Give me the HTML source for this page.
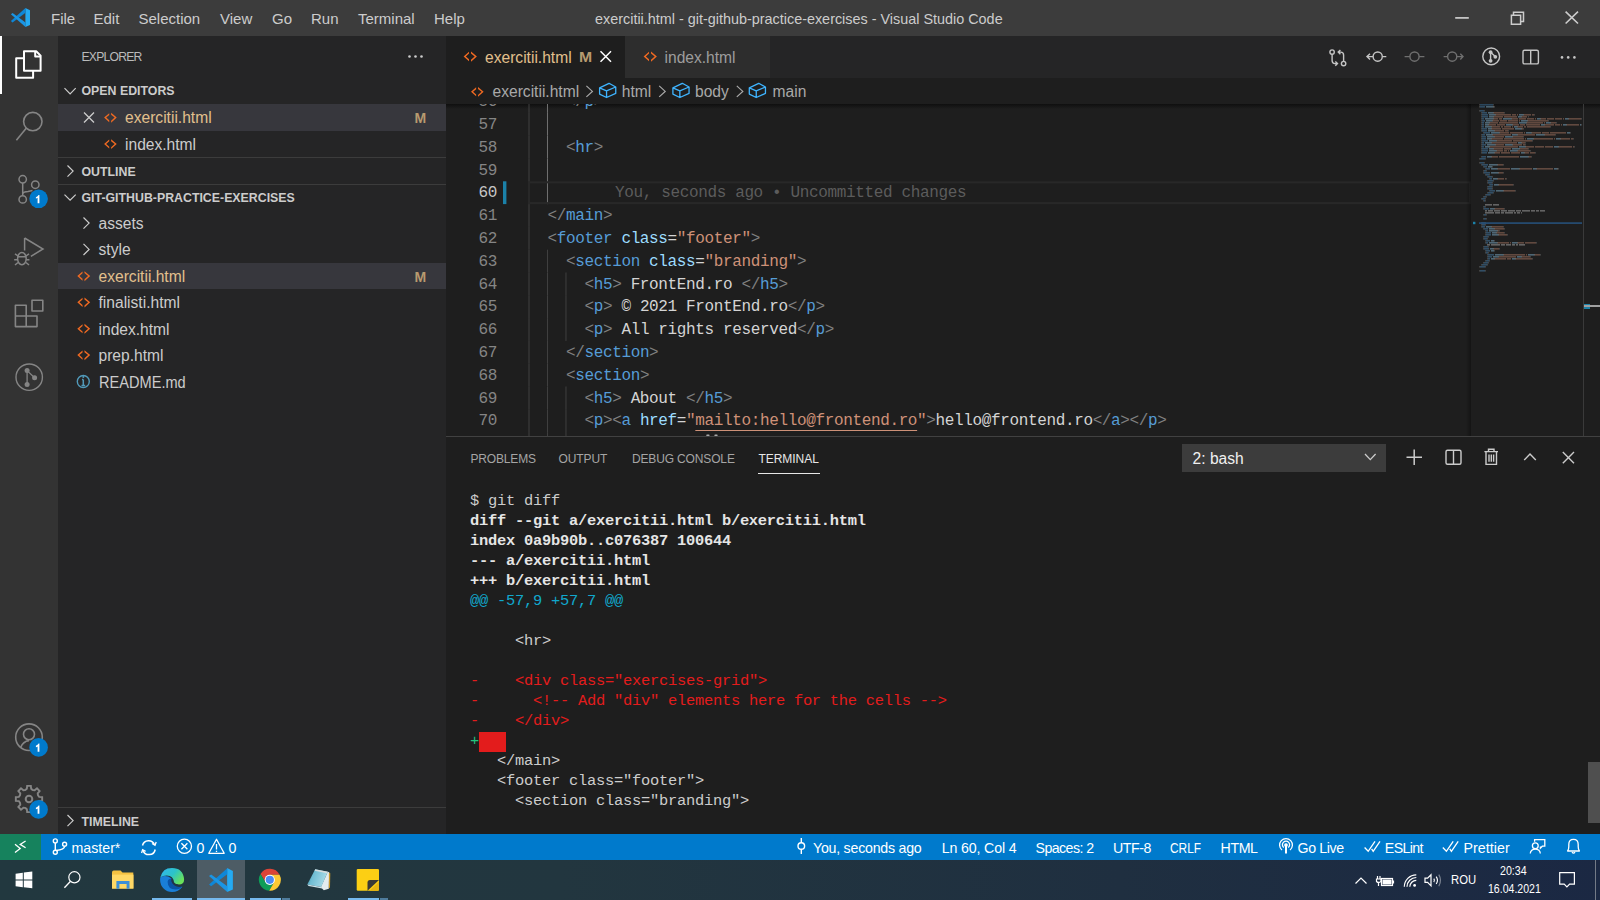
<!DOCTYPE html><html><head><meta charset="utf-8"><style>
html,body{margin:0;padding:0;width:1600px;height:900px;overflow:hidden;background:#1e1e1e;}
.t{position:absolute;white-space:pre;font-family:'Liberation Sans',sans-serif;}
.r{position:absolute;display:block;}
</style></head><body>
<div class="r" style="left:0px;top:0px;width:1600px;height:36px;background:#3c3c3c;"></div>
<div class="r" style="left:0px;top:36px;width:58px;height:798px;background:#333333;"></div>
<div class="r" style="left:58px;top:36px;width:388px;height:798px;background:#252526;"></div>
<div class="r" style="left:446px;top:36px;width:1154px;height:42px;background:#252526;"></div>
<div class="r" style="left:446px;top:78px;width:1154px;height:756px;background:#1e1e1e;"></div>
<div class="r" style="left:0px;top:834px;width:1600px;height:26px;background:#007acc;"></div>
<div class="r" style="left:0px;top:834px;width:41px;height:26px;background:#16825d;"></div>
<div class="r" style="left:0;top:860px;width:1600px;height:40px;background:linear-gradient(90deg,#22383f 0%,#22363f 35%,#1f2f40 70%,#1b2843 100%)"></div>
<svg class="r" style="left:8px;top:5px;" width="26" height="26" viewBox="8 5 26 26"><g transform="translate(10.9,7.9)"><path d="M14.5,0 L19.1,2.3 V17.1 L14.5,19.2 Z" fill="#24aaf2"/><path d="M14.6,0.1 V4.9 L1.7,14.5 L0,13.2 Z" fill="#0e87d8"/><path d="M0,6.3 L1.7,5.1 L14.6,14.6 V19.2 Z" fill="#1a95e4"/></g></svg>
<div class="t" style="left:51.00px;top:11.00px;font-size:15px;line-height:15px;color:#cccccc;">File</div>
<div class="t" style="left:93.50px;top:11.00px;font-size:15px;line-height:15px;color:#cccccc;">Edit</div>
<div class="t" style="left:138.50px;top:11.00px;font-size:15px;line-height:15px;color:#cccccc;">Selection</div>
<div class="t" style="left:220.00px;top:11.00px;font-size:15px;line-height:15px;color:#cccccc;">View</div>
<div class="t" style="left:272.00px;top:11.00px;font-size:15px;line-height:15px;color:#cccccc;">Go</div>
<div class="t" style="left:311.00px;top:11.00px;font-size:15px;line-height:15px;color:#cccccc;">Run</div>
<div class="t" style="left:358.00px;top:11.00px;font-size:15px;line-height:15px;color:#cccccc;">Terminal</div>
<div class="t" style="left:434.00px;top:11.00px;font-size:15px;line-height:15px;color:#cccccc;">Help</div>
<div class="t" style="left:595.00px;top:12.01px;font-size:14.4px;line-height:14.4px;color:#cccccc;">exercitii.html - git-github-practice-exercises - Visual Studio Code</div>
<svg class="r" style="left:1450px;top:5px;" width="140" height="26" viewBox="1450 5 140 26"><path d="M1455.2,17.9 H1468.8" stroke="#cccccc" stroke-width="1.7"/>
<path d="M1511.4,15.3 H1520.6 V24.2 H1511.4 Z M1513.5,15.3 V12.3 H1523.5 V21.6 H1520.6 M1512.2,14.5" fill="none" stroke="#cccccc" stroke-width="1.5"/>
<path d="M1565.6,11.6 L1578,23.5 M1578,11.6 L1565.6,23.5" stroke="#cccccc" stroke-width="1.6"/></svg>
<div class="r" style="left:0px;top:36px;width:2px;height:58px;background:#ffffff;"></div>
<svg class="r" style="left:0px;top:36px;" width="58" height="798" viewBox="0 36 58 798">
<g fill="none" stroke="#ffffff" stroke-width="2" stroke-linejoin="round">
<path d="M24,51.2 H36.2 L40.6,55.6 V70.8 H24 Z"/>
<path d="M35.2,51.2 V56.6 H40.6"/>
<path d="M23.5,58.2 H16.2 V77.8 H33.1 V71"/>
</g>
<g fill="none" stroke="#858585" stroke-width="1.6">
<circle cx="32.8" cy="121.6" r="9.2"/>
<path d="M26.4,128 L16.4,140.2"/>
</g>
<g fill="none" stroke="#858585" stroke-width="1.5">
<circle cx="22.7" cy="179.3" r="3.7"/>
<circle cx="35.3" cy="184.7" r="3.7"/>
<circle cx="22.7" cy="199.4" r="3.7"/>
<path d="M22.7,183 V195.7 M22.7,194 Q23.5,191.5 28,191.5 L32.5,190.5"/>
</g>
<circle cx="38.6" cy="198.8" r="9.3" fill="#007acc"/>
<g fill="none" stroke="#858585" stroke-width="1.5">
<path d="M24.6,238 V250.5 M24.6,238 L43,249 L30.9,256.4"/>
<ellipse cx="21.9" cy="258.6" rx="4.3" ry="6.2"/>
<path d="M17.6,256.8 H26.2 M15,253.8 L18,256 M29,253.8 L26,256 M14.2,259.7 H17.6 M26.2,259.7 H29.4 M15,265 L18,262.5 M29,265 L26,262.5"/>
</g>
<g fill="none" stroke="#858585" stroke-width="1.6" stroke-linejoin="round">
<path d="M15.4,305.3 H26.2 V326.6 H15.4 Z M15.4,316 H37 V326.6 H26.2"/>
<rect x="32" y="300.2" width="10.8" height="10.8"/>
</g>
<g fill="#858585" stroke="#858585">
<circle cx="29.2" cy="377.2" r="13.2" fill="none" stroke-width="1.4"/>
<circle cx="27.1" cy="370.6" r="2.5" stroke="none"/>
<circle cx="27.1" cy="384.4" r="2.5" stroke="none"/>
<circle cx="34.6" cy="377.7" r="2.5" stroke="none"/>
<path d="M27.1,370.6 V384.4 M27.1,370.6 L34.6,377.7" stroke-width="1.3" fill="none"/>
</g>
<g fill="none" stroke="#858585" stroke-width="1.6">
<circle cx="29" cy="737.2" r="13.3"/>
<circle cx="29" cy="734.3" r="5.5"/>
<path d="M20.6,747.6 Q23,741.2 29,740.6"/>
</g>
<circle cx="38.6" cy="747.4" r="9.3" fill="#007acc"/>
<g fill="none" stroke="#858585" stroke-width="1.9" stroke-linejoin="miter">
<path d="M25.57,789.82 L26.84,788.83 L27.15,785.83 L30.85,785.83 L31.16,788.83 L32.43,789.82 L33.06,790.08 L34.66,790.28 L37.00,788.38 L39.62,791.00 L37.72,793.34 L37.92,794.94 L38.18,795.57 L39.17,796.84 L42.17,797.15 L42.17,800.85 L39.17,801.16 L38.18,802.43 L37.92,803.06 L37.72,804.66 L39.62,807.00 L37.00,809.62 L34.66,807.72 L33.06,807.92 L32.43,808.18 L31.16,809.17 L30.85,812.17 L27.15,812.17 L26.84,809.17 L25.57,808.18 L24.94,807.92 L23.34,807.72 L21.00,809.62 L18.38,807.00 L20.28,804.66 L20.08,803.06 L19.82,802.43 L18.83,801.16 L15.83,800.85 L15.83,797.15 L18.83,796.84 L19.82,795.57 L20.08,794.94 L20.28,793.34 L18.38,791.00 L21.00,788.38 L23.34,790.28 L24.94,790.08 Z"/>
<circle cx="29" cy="799" r="3.3" stroke-width="2"/>
</g>
<circle cx="38.6" cy="809.4" r="9.3" fill="#007acc"/>
</svg>
<svg class="r" style="left:30px;top:190px;" width="18" height="16" viewBox="30 190 18 16"><path d="M39.4,203.20 V195.00 H38.6 Q37.8,196.40 35.9,197.20 V198.60 Q37.2,198.20 37.6,197.80 V203.20 Z" fill="#ffffff"/></svg>
<svg class="r" style="left:30px;top:739px;" width="18" height="16" viewBox="30 739 18 16"><path d="M39.4,751.80 V743.60 H38.6 Q37.8,745.00 35.9,745.80 V747.20 Q37.2,746.80 37.6,746.40 V751.80 Z" fill="#ffffff"/></svg>
<svg class="r" style="left:30px;top:801px;" width="18" height="16" viewBox="30 801 18 16"><path d="M39.4,813.80 V805.60 H38.6 Q37.8,807.00 35.9,807.80 V809.20 Q37.2,808.80 37.6,808.40 V813.80 Z" fill="#ffffff"/></svg>
<div class="t" style="left:81.50px;top:51.47px;font-size:12.2px;line-height:12.2px;color:#bbbbbb;letter-spacing:-0.8px;">EXPLORER</div>
<svg class="r" style="left:400px;top:48px;" width="30" height="16" viewBox="400 48 30 16"><g fill="#cccccc"><circle cx="409.5" cy="56.5" r="1.3"/><circle cx="415.5" cy="56.5" r="1.3"/><circle cx="421.5" cy="56.5" r="1.3"/></g></svg>
<div class="t" style="left:81.50px;top:85.25px;font-size:12.35px;line-height:12.35px;color:#cccccc;font-weight:700;">OPEN EDITORS</div>
<div class="r" style="left:58px;top:104px;width:388px;height:27px;background:#37373d;"></div>
<div class="t" style="left:125.00px;top:110.39px;font-size:15.6px;line-height:15.6px;color:#e2c08d;">exercitii.html</div>
<div class="t" style="left:414.50px;top:111.15px;font-size:14px;line-height:14px;color:#b89a6f;font-weight:700;">M</div>
<div class="t" style="left:125.00px;top:136.99px;font-size:15.6px;line-height:15.6px;color:#cccccc;">index.html</div>
<div class="r" style="left:58px;top:157px;width:388px;height:1px;background:#3c3c3c;"></div>
<div class="t" style="left:81.50px;top:165.85px;font-size:12.35px;line-height:12.35px;color:#cccccc;font-weight:700;">OUTLINE</div>
<div class="r" style="left:58px;top:184px;width:388px;height:1px;background:#3c3c3c;"></div>
<div class="t" style="left:81.50px;top:191.95px;font-size:12.35px;line-height:12.35px;color:#cccccc;font-weight:700;">GIT-GITHUB-PRACTICE-EXERCISES</div>
<div class="t" style="left:98.50px;top:215.99px;font-size:15.6px;line-height:15.6px;color:#cccccc;">assets</div>
<div class="t" style="left:98.50px;top:242.39px;font-size:15.6px;line-height:15.6px;color:#cccccc;">style</div>
<div class="r" style="left:58px;top:263px;width:388px;height:26.4px;background:#37373d;"></div>
<div class="t" style="left:98.50px;top:268.79px;font-size:15.6px;line-height:15.6px;color:#e2c08d;">exercitii.html</div>
<div class="t" style="left:414.50px;top:269.55px;font-size:14px;line-height:14px;color:#b89a6f;font-weight:700;">M</div>
<div class="t" style="left:98.50px;top:295.19px;font-size:15.6px;line-height:15.6px;color:#cccccc;">finalisti.html</div>
<div class="t" style="left:98.50px;top:321.59px;font-size:15.6px;line-height:15.6px;color:#cccccc;">index.html</div>
<div class="t" style="left:98.50px;top:347.99px;font-size:15.6px;line-height:15.6px;color:#cccccc;">prep.html</div>
<div class="t" style="left:98.50px;top:374.59px;font-size:15.6px;line-height:15.6px;color:#cccccc;transform:scaleX(0.935);transform-origin:0 0;">README.md</div>
<div class="r" style="left:58px;top:807px;width:388px;height:1px;background:#3c3c3c;"></div>
<div class="t" style="left:81.50px;top:815.55px;font-size:12.35px;line-height:12.35px;color:#cccccc;font-weight:700;">TIMELINE</div>
<svg class="r" style="left:58px;top:36px;" width="388" height="798" viewBox="58 36 388 798"><path d="M64.5,88.2 L70.1,93.8 L75.7,88.2" fill="none" stroke="#cccccc" stroke-width="1.2"/><path d="M84,112.5 L94,122.5 M94,112.5 L84,122.5" stroke="#cccccc" stroke-width="1.3"/><path d="M109.22999999999999,113.13499999999999 L104.1,117.6 L109.22999999999999,122.16 V120.35499999999999 L106.19,117.6 L109.22999999999999,114.94 Z M111.13,112.85 L116.735,117.6 L111.13,122.63499999999999 V120.735 L114.645,117.6 L111.13,114.75 Z" fill="#f06a22"/><path d="M109.22999999999999,139.535 L104.1,144.0 L109.22999999999999,148.56 V146.755 L106.19,144.0 L109.22999999999999,141.34 Z M111.13,139.25 L116.735,144.0 L111.13,149.035 V147.135 L114.645,144.0 L111.13,141.15 Z" fill="#f06a22"/><path d="M67.5,165.5 L73.1,171.1 L67.5,176.7" fill="none" stroke="#cccccc" stroke-width="1.2"/><path d="M64.5,194.6 L70.1,200.2 L75.7,194.6" fill="none" stroke="#cccccc" stroke-width="1.2"/><path d="M83.5,217.5 L89.1,223.1 L83.5,228.7" fill="none" stroke="#cccccc" stroke-width="1.2"/><path d="M83.5,243.8 L89.1,249.4 L83.5,255.0" fill="none" stroke="#cccccc" stroke-width="1.2"/><path d="M82.538,271.441 L77.3,276.0 L82.538,280.656 V278.813 L79.434,276.0 L82.538,273.284 Z M84.478,271.15 L90.201,276.0 L84.478,281.141 V279.201 L88.067,276.0 L84.478,273.09 Z" fill="#f06a22"/><path d="M82.538,297.74099999999993 L77.3,302.29999999999995 L82.538,306.95599999999996 V305.11299999999994 L79.434,302.29999999999995 L82.538,299.58399999999995 Z M84.478,297.44999999999993 L90.201,302.29999999999995 L84.478,307.441 V305.501 L88.067,302.29999999999995 L84.478,299.38999999999993 Z" fill="#f06a22"/><path d="M82.538,324.1409999999999 L77.3,328.69999999999993 L82.538,333.35599999999994 V331.5129999999999 L79.434,328.69999999999993 L82.538,325.9839999999999 Z M84.478,323.8499999999999 L90.201,328.69999999999993 L84.478,333.84099999999995 V331.90099999999995 L88.067,328.69999999999993 L84.478,325.7899999999999 Z" fill="#f06a22"/><path d="M82.538,350.54099999999994 L77.3,355.09999999999997 L82.538,359.756 V357.91299999999995 L79.434,355.09999999999997 L82.538,352.38399999999996 Z M84.478,350.24999999999994 L90.201,355.09999999999997 L84.478,360.241 V358.301 L88.067,355.09999999999997 L84.478,352.18999999999994 Z" fill="#f06a22"/><circle cx="83.3" cy="381.5" r="6" fill="none" stroke="#519aba" stroke-width="1.4"/><path d="M83.3,379.5 V385.5 M81.5,385.5 H85.2 M82,379.5 H83.3" stroke="#519aba" stroke-width="1.5"/><circle cx="83.3" cy="377" r="1" fill="#519aba"/><path d="M67.5,815 L73.1,820.6 L67.5,826.2" fill="none" stroke="#cccccc" stroke-width="1.2"/></svg>
<div class="r" style="left:446px;top:36px;width:179px;height:42px;background:#1e1e1e;"></div>
<div class="r" style="left:625px;top:36px;width:145px;height:42px;background:#2d2d2d;"></div>
<div class="t" style="left:485.00px;top:49.99px;font-size:15.6px;line-height:15.6px;color:#e2c08d;">exercitii.html</div>
<div class="t" style="left:578.60px;top:50.04px;font-size:14.6px;line-height:14.6px;color:#b89a6f;font-weight:700;transform:scaleX(1.08);transform-origin:0 0;">M</div>
<div class="t" style="left:664.50px;top:49.99px;font-size:15.6px;line-height:15.6px;color:#9d9d9d;">index.html</div>
<div class="t" style="left:492.50px;top:83.79px;font-size:15.6px;line-height:15.6px;color:#a9a9a9;">exercitii.html</div>
<div class="t" style="left:621.80px;top:83.79px;font-size:15.6px;line-height:15.6px;color:#a9a9a9;">html</div>
<div class="t" style="left:695.00px;top:83.79px;font-size:15.6px;line-height:15.6px;color:#a9a9a9;">body</div>
<div class="t" style="left:772.60px;top:83.79px;font-size:15.6px;line-height:15.6px;color:#a9a9a9;">main</div>
<svg class="r" style="left:446px;top:36px;" width="1154" height="68" viewBox="446 36 1154 68"><path d="M469.0,51.699999999999996 L463.6,56.4 L469.0,61.199999999999996 V59.3 L465.8,56.4 L469.0,53.6 Z M471.0,51.4 L476.90000000000003,56.4 L471.0,61.699999999999996 V59.699999999999996 L474.70000000000005,56.4 L471.0,53.4 Z" fill="#f06a22"/><path d="M600.5,51.2 L611,61.7 M611,51.2 L600.5,61.7" stroke="#ffffff" stroke-width="1.5"/><path d="M649.0,51.699999999999996 L643.6,56.4 L649.0,61.199999999999996 V59.3 L645.8000000000001,56.4 L649.0,53.6 Z M651.0,51.4 L656.9,56.4 L651.0,61.699999999999996 V59.699999999999996 L654.7,56.4 L651.0,53.4 Z" fill="#f06a22"/><g fill="none" stroke="#c5c5c5" stroke-width="1.4">
<circle cx="1332.1" cy="52.1" r="2.2"/><circle cx="1343.6" cy="63.6" r="2.2"/>
<path d="M1332.1,54.3 V60.6 Q1332.1,63.6 1335,63.6 H1337.3 M1335.3,61.4 L1337.5,63.6 L1335.3,65.8 M1343.6,61.4 V55.1 Q1343.6,52.1 1340.7,52.1 H1338.4 M1340.4,49.9 L1338.2,52.1 L1340.4,54.3"/>
<circle cx="1377.7" cy="56.6" r="4.6"/><path d="M1373,56.6 H1367 M1370,53.8 L1367,56.6 L1370,59.4 M1382.3,56.6 H1386.3"/>
</g>
<g fill="none" stroke="#6f6f6f" stroke-width="1.4">
<circle cx="1414.5" cy="56.6" r="4.6"/><path d="M1404.6,56.6 H1409.9 M1419.1,56.6 H1424.4"/>
<circle cx="1452.2" cy="56.6" r="4.6"/><path d="M1443.6,56.6 H1447.6 M1456.8,56.6 H1463 M1460.3,53.8 L1463,56.6 L1460.3,59.4"/>
</g>
<g fill="none" stroke="#c5c5c5" stroke-width="1.4">
<circle cx="1491.2" cy="56.4" r="8.4"/>
<path d="M1490.6,52.2 V60.8 M1490.6,52.2 L1495.3,56.6"/>
</g>
<g fill="#c5c5c5"><circle cx="1490.6" cy="52.2" r="1.9"/><circle cx="1490.6" cy="60.8" r="1.9"/><circle cx="1495.3" cy="56.8" r="1.9"/></g>
<g fill="none" stroke="#c5c5c5" stroke-width="1.4"><rect x="1523" y="50.3" width="15.4" height="13.6" rx="1.5"/><path d="M1530.7,50.3 V63.9"/></g>
<g fill="#c5c5c5"><circle cx="1562" cy="57.4" r="1.3"/><circle cx="1568.2" cy="57.4" r="1.3"/><circle cx="1574.4" cy="57.4" r="1.3"/></g>
<path d="M476.13,87.335 L471.0,91.8 L476.13,96.36 V94.55499999999999 L473.09,91.8 L476.13,89.14 Z M478.03,87.05 L483.635,91.8 L478.03,96.835 V94.935 L481.545,91.8 L478.03,88.95 Z" fill="#f06a22"/><path d="M586.4,85.9 L592.4,91.4 L586.4,96.9" fill="none" stroke="#a9a9a9" stroke-width="1.2"/><path d="M599.6,87.9 L609.0,83.3 L615.75,87 V93.4 L606.5500000000001,97.5 L599.6,94.1 Z M599.6,87.9 L606.5500000000001,90.8 L615.75,87 M606.5500000000001,90.8 V97.5" fill="none" stroke="#3fb4ff" stroke-width="1.3" stroke-linejoin="round"/><path d="M659.2,85.9 L665.2,91.4 L659.2,96.9" fill="none" stroke="#a9a9a9" stroke-width="1.2"/><path d="M672.9,87.9 L682.3,83.3 L689.05,87 V93.4 L679.85,97.5 L672.9,94.1 Z M672.9,87.9 L679.85,90.8 L689.05,87 M679.85,90.8 V97.5" fill="none" stroke="#3fb4ff" stroke-width="1.3" stroke-linejoin="round"/><path d="M736.8,85.9 L742.8,91.4 L736.8,96.9" fill="none" stroke="#a9a9a9" stroke-width="1.2"/><path d="M749.3,87.9 L758.6999999999999,83.3 L765.4499999999999,87 V93.4 L756.25,97.5 L749.3,94.1 Z M749.3,87.9 L756.25,90.8 L765.4499999999999,87 M756.25,90.8 V97.5" fill="none" stroke="#3fb4ff" stroke-width="1.3" stroke-linejoin="round"/></svg>
<div class="r" style="left:446px;top:104px;width:1154px;height:5px;background:linear-gradient(#0f0f0f,rgba(30,30,30,0))"></div>
<svg class="r" style="left:446px;top:104px;" width="1154" height="332" viewBox="446 104 1154 332"><rect x="528.50" y="104.00" width="1" height="8.90" fill="#404040"/><rect x="546.98" y="104.00" width="1" height="8.90" fill="#707070"/><rect x="528.50" y="112.90" width="1" height="22.80" fill="#404040"/><rect x="546.98" y="112.90" width="1" height="22.80" fill="#707070"/><rect x="528.50" y="135.70" width="1" height="22.80" fill="#404040"/><rect x="546.98" y="135.70" width="1" height="22.80" fill="#707070"/><rect x="528.50" y="158.50" width="1" height="22.80" fill="#404040"/><rect x="546.98" y="158.50" width="1" height="22.80" fill="#707070"/><rect x="528.50" y="181.30" width="1" height="22.80" fill="#404040"/><rect x="546.98" y="181.30" width="1" height="22.80" fill="#707070"/><rect x="528.50" y="204.10" width="1" height="22.80" fill="#404040"/><rect x="528.50" y="226.90" width="1" height="22.80" fill="#404040"/><rect x="528.50" y="249.70" width="1" height="22.80" fill="#404040"/><rect x="546.98" y="249.70" width="1" height="22.80" fill="#404040"/><rect x="528.50" y="272.50" width="1" height="22.80" fill="#404040"/><rect x="546.98" y="272.50" width="1" height="22.80" fill="#404040"/><rect x="565.46" y="272.50" width="1" height="22.80" fill="#404040"/><rect x="528.50" y="295.30" width="1" height="22.80" fill="#404040"/><rect x="546.98" y="295.30" width="1" height="22.80" fill="#404040"/><rect x="565.46" y="295.30" width="1" height="22.80" fill="#404040"/><rect x="528.50" y="318.10" width="1" height="22.80" fill="#404040"/><rect x="546.98" y="318.10" width="1" height="22.80" fill="#404040"/><rect x="565.46" y="318.10" width="1" height="22.80" fill="#404040"/><rect x="528.50" y="340.90" width="1" height="22.80" fill="#404040"/><rect x="546.98" y="340.90" width="1" height="22.80" fill="#404040"/><rect x="528.50" y="363.70" width="1" height="22.80" fill="#404040"/><rect x="546.98" y="363.70" width="1" height="22.80" fill="#404040"/><rect x="528.50" y="386.50" width="1" height="22.80" fill="#404040"/><rect x="546.98" y="386.50" width="1" height="22.80" fill="#404040"/><rect x="565.46" y="386.50" width="1" height="22.80" fill="#404040"/><rect x="528.50" y="409.30" width="1" height="22.80" fill="#404040"/><rect x="546.98" y="409.30" width="1" height="22.80" fill="#404040"/><rect x="565.46" y="409.30" width="1" height="22.80" fill="#404040"/><rect x="528.50" y="432.10" width="1" height="3.90" fill="#404040"/><rect x="546.98" y="432.10" width="1" height="3.90" fill="#404040"/><rect x="565.46" y="432.10" width="1" height="3.90" fill="#404040"/><rect x="529" y="182.30" width="941" height="20.80" fill="none" stroke="#282828" stroke-width="2"/><rect x="503" y="181.30" width="3.4" height="22.80" fill="#1b81a8"/><rect x="706.3" y="434.6" width="3.2" height="1.4" rx="0.6" fill="#a8a8a8"/><rect x="714.4" y="434.6" width="3.2" height="1.4" rx="0.6" fill="#a8a8a8"/></svg>
<div class="r" style="left:446px;top:104px;width:1024px;height:332px;overflow:hidden">
<div class="t" style="left:32.52px;top:-9.86px;font-family:'Liberation Mono',monospace;font-size:16px;line-height:16px;letter-spacing:-0.36px;color:#858585;">56</div>
<div class="t" style="left:119.96px;top:-9.86px;font-family:'Liberation Mono',monospace;font-size:16px;line-height:16px;letter-spacing:-0.36px;color:#808080;">&lt;/</div>
<div class="t" style="left:138.44px;top:-9.86px;font-family:'Liberation Mono',monospace;font-size:16px;line-height:16px;letter-spacing:-0.36px;color:#569cd6;">p</div>
<div class="t" style="left:147.68px;top:-9.86px;font-family:'Liberation Mono',monospace;font-size:16px;line-height:16px;letter-spacing:-0.36px;color:#808080;">&gt;</div>
<div class="t" style="left:32.52px;top:12.94px;font-family:'Liberation Mono',monospace;font-size:16px;line-height:16px;letter-spacing:-0.36px;color:#858585;">57</div>
<div class="t" style="left:32.52px;top:35.74px;font-family:'Liberation Mono',monospace;font-size:16px;line-height:16px;letter-spacing:-0.36px;color:#858585;">58</div>
<div class="t" style="left:119.96px;top:35.74px;font-family:'Liberation Mono',monospace;font-size:16px;line-height:16px;letter-spacing:-0.36px;color:#808080;">&lt;</div>
<div class="t" style="left:129.20px;top:35.74px;font-family:'Liberation Mono',monospace;font-size:16px;line-height:16px;letter-spacing:-0.36px;color:#569cd6;">hr</div>
<div class="t" style="left:147.68px;top:35.74px;font-family:'Liberation Mono',monospace;font-size:16px;line-height:16px;letter-spacing:-0.36px;color:#808080;">&gt;</div>
<div class="t" style="left:32.52px;top:58.54px;font-family:'Liberation Mono',monospace;font-size:16px;line-height:16px;letter-spacing:-0.36px;color:#858585;">59</div>
<div class="t" style="left:32.52px;top:81.34px;font-family:'Liberation Mono',monospace;font-size:16px;line-height:16px;letter-spacing:-0.36px;color:#c6c6c6;">60</div>
<div class="t" style="left:32.52px;top:104.14px;font-family:'Liberation Mono',monospace;font-size:16px;line-height:16px;letter-spacing:-0.36px;color:#858585;">61</div>
<div class="t" style="left:101.48px;top:104.14px;font-family:'Liberation Mono',monospace;font-size:16px;line-height:16px;letter-spacing:-0.36px;color:#808080;">&lt;/</div>
<div class="t" style="left:119.96px;top:104.14px;font-family:'Liberation Mono',monospace;font-size:16px;line-height:16px;letter-spacing:-0.36px;color:#569cd6;">main</div>
<div class="t" style="left:156.92px;top:104.14px;font-family:'Liberation Mono',monospace;font-size:16px;line-height:16px;letter-spacing:-0.36px;color:#808080;">&gt;</div>
<div class="t" style="left:32.52px;top:126.94px;font-family:'Liberation Mono',monospace;font-size:16px;line-height:16px;letter-spacing:-0.36px;color:#858585;">62</div>
<div class="t" style="left:101.48px;top:126.94px;font-family:'Liberation Mono',monospace;font-size:16px;line-height:16px;letter-spacing:-0.36px;color:#808080;">&lt;</div>
<div class="t" style="left:110.72px;top:126.94px;font-family:'Liberation Mono',monospace;font-size:16px;line-height:16px;letter-spacing:-0.36px;color:#569cd6;">footer</div>
<div class="t" style="left:175.40px;top:126.94px;font-family:'Liberation Mono',monospace;font-size:16px;line-height:16px;letter-spacing:-0.36px;color:#9cdcfe;">class</div>
<div class="t" style="left:221.60px;top:126.94px;font-family:'Liberation Mono',monospace;font-size:16px;line-height:16px;letter-spacing:-0.36px;color:#d4d4d4;">=</div>
<div class="t" style="left:230.84px;top:126.94px;font-family:'Liberation Mono',monospace;font-size:16px;line-height:16px;letter-spacing:-0.36px;color:#ce9178;">&quot;footer&quot;</div>
<div class="t" style="left:304.76px;top:126.94px;font-family:'Liberation Mono',monospace;font-size:16px;line-height:16px;letter-spacing:-0.36px;color:#808080;">&gt;</div>
<div class="t" style="left:32.52px;top:149.74px;font-family:'Liberation Mono',monospace;font-size:16px;line-height:16px;letter-spacing:-0.36px;color:#858585;">63</div>
<div class="t" style="left:119.96px;top:149.74px;font-family:'Liberation Mono',monospace;font-size:16px;line-height:16px;letter-spacing:-0.36px;color:#808080;">&lt;</div>
<div class="t" style="left:129.20px;top:149.74px;font-family:'Liberation Mono',monospace;font-size:16px;line-height:16px;letter-spacing:-0.36px;color:#569cd6;">section</div>
<div class="t" style="left:203.12px;top:149.74px;font-family:'Liberation Mono',monospace;font-size:16px;line-height:16px;letter-spacing:-0.36px;color:#9cdcfe;">class</div>
<div class="t" style="left:249.32px;top:149.74px;font-family:'Liberation Mono',monospace;font-size:16px;line-height:16px;letter-spacing:-0.36px;color:#d4d4d4;">=</div>
<div class="t" style="left:258.56px;top:149.74px;font-family:'Liberation Mono',monospace;font-size:16px;line-height:16px;letter-spacing:-0.36px;color:#ce9178;">&quot;branding&quot;</div>
<div class="t" style="left:350.96px;top:149.74px;font-family:'Liberation Mono',monospace;font-size:16px;line-height:16px;letter-spacing:-0.36px;color:#808080;">&gt;</div>
<div class="t" style="left:32.52px;top:172.54px;font-family:'Liberation Mono',monospace;font-size:16px;line-height:16px;letter-spacing:-0.36px;color:#858585;">64</div>
<div class="t" style="left:138.44px;top:172.54px;font-family:'Liberation Mono',monospace;font-size:16px;line-height:16px;letter-spacing:-0.36px;color:#808080;">&lt;</div>
<div class="t" style="left:147.68px;top:172.54px;font-family:'Liberation Mono',monospace;font-size:16px;line-height:16px;letter-spacing:-0.36px;color:#569cd6;">h5</div>
<div class="t" style="left:166.16px;top:172.54px;font-family:'Liberation Mono',monospace;font-size:16px;line-height:16px;letter-spacing:-0.36px;color:#808080;">&gt;</div>
<div class="t" style="left:175.40px;top:172.54px;font-family:'Liberation Mono',monospace;font-size:16px;line-height:16px;letter-spacing:-0.36px;color:#d4d4d4;"> FrontEnd.ro </div>
<div class="t" style="left:295.52px;top:172.54px;font-family:'Liberation Mono',monospace;font-size:16px;line-height:16px;letter-spacing:-0.36px;color:#808080;">&lt;/</div>
<div class="t" style="left:314.00px;top:172.54px;font-family:'Liberation Mono',monospace;font-size:16px;line-height:16px;letter-spacing:-0.36px;color:#569cd6;">h5</div>
<div class="t" style="left:332.48px;top:172.54px;font-family:'Liberation Mono',monospace;font-size:16px;line-height:16px;letter-spacing:-0.36px;color:#808080;">&gt;</div>
<div class="t" style="left:32.52px;top:195.34px;font-family:'Liberation Mono',monospace;font-size:16px;line-height:16px;letter-spacing:-0.36px;color:#858585;">65</div>
<div class="t" style="left:138.44px;top:195.34px;font-family:'Liberation Mono',monospace;font-size:16px;line-height:16px;letter-spacing:-0.36px;color:#808080;">&lt;</div>
<div class="t" style="left:147.68px;top:195.34px;font-family:'Liberation Mono',monospace;font-size:16px;line-height:16px;letter-spacing:-0.36px;color:#569cd6;">p</div>
<div class="t" style="left:156.92px;top:195.34px;font-family:'Liberation Mono',monospace;font-size:16px;line-height:16px;letter-spacing:-0.36px;color:#808080;">&gt;</div>
<div class="t" style="left:166.16px;top:195.34px;font-family:'Liberation Mono',monospace;font-size:16px;line-height:16px;letter-spacing:-0.36px;color:#d4d4d4;"> © 2021 FrontEnd.ro</div>
<div class="t" style="left:341.72px;top:195.34px;font-family:'Liberation Mono',monospace;font-size:16px;line-height:16px;letter-spacing:-0.36px;color:#808080;">&lt;/</div>
<div class="t" style="left:360.20px;top:195.34px;font-family:'Liberation Mono',monospace;font-size:16px;line-height:16px;letter-spacing:-0.36px;color:#569cd6;">p</div>
<div class="t" style="left:369.44px;top:195.34px;font-family:'Liberation Mono',monospace;font-size:16px;line-height:16px;letter-spacing:-0.36px;color:#808080;">&gt;</div>
<div class="t" style="left:32.52px;top:218.14px;font-family:'Liberation Mono',monospace;font-size:16px;line-height:16px;letter-spacing:-0.36px;color:#858585;">66</div>
<div class="t" style="left:138.44px;top:218.14px;font-family:'Liberation Mono',monospace;font-size:16px;line-height:16px;letter-spacing:-0.36px;color:#808080;">&lt;</div>
<div class="t" style="left:147.68px;top:218.14px;font-family:'Liberation Mono',monospace;font-size:16px;line-height:16px;letter-spacing:-0.36px;color:#569cd6;">p</div>
<div class="t" style="left:156.92px;top:218.14px;font-family:'Liberation Mono',monospace;font-size:16px;line-height:16px;letter-spacing:-0.36px;color:#808080;">&gt;</div>
<div class="t" style="left:166.16px;top:218.14px;font-family:'Liberation Mono',monospace;font-size:16px;line-height:16px;letter-spacing:-0.36px;color:#d4d4d4;"> All rights reserved</div>
<div class="t" style="left:350.96px;top:218.14px;font-family:'Liberation Mono',monospace;font-size:16px;line-height:16px;letter-spacing:-0.36px;color:#808080;">&lt;/</div>
<div class="t" style="left:369.44px;top:218.14px;font-family:'Liberation Mono',monospace;font-size:16px;line-height:16px;letter-spacing:-0.36px;color:#569cd6;">p</div>
<div class="t" style="left:378.68px;top:218.14px;font-family:'Liberation Mono',monospace;font-size:16px;line-height:16px;letter-spacing:-0.36px;color:#808080;">&gt;</div>
<div class="t" style="left:32.52px;top:240.94px;font-family:'Liberation Mono',monospace;font-size:16px;line-height:16px;letter-spacing:-0.36px;color:#858585;">67</div>
<div class="t" style="left:119.96px;top:240.94px;font-family:'Liberation Mono',monospace;font-size:16px;line-height:16px;letter-spacing:-0.36px;color:#808080;">&lt;/</div>
<div class="t" style="left:138.44px;top:240.94px;font-family:'Liberation Mono',monospace;font-size:16px;line-height:16px;letter-spacing:-0.36px;color:#569cd6;">section</div>
<div class="t" style="left:203.12px;top:240.94px;font-family:'Liberation Mono',monospace;font-size:16px;line-height:16px;letter-spacing:-0.36px;color:#808080;">&gt;</div>
<div class="t" style="left:32.52px;top:263.74px;font-family:'Liberation Mono',monospace;font-size:16px;line-height:16px;letter-spacing:-0.36px;color:#858585;">68</div>
<div class="t" style="left:119.96px;top:263.74px;font-family:'Liberation Mono',monospace;font-size:16px;line-height:16px;letter-spacing:-0.36px;color:#808080;">&lt;</div>
<div class="t" style="left:129.20px;top:263.74px;font-family:'Liberation Mono',monospace;font-size:16px;line-height:16px;letter-spacing:-0.36px;color:#569cd6;">section</div>
<div class="t" style="left:193.88px;top:263.74px;font-family:'Liberation Mono',monospace;font-size:16px;line-height:16px;letter-spacing:-0.36px;color:#808080;">&gt;</div>
<div class="t" style="left:32.52px;top:286.54px;font-family:'Liberation Mono',monospace;font-size:16px;line-height:16px;letter-spacing:-0.36px;color:#858585;">69</div>
<div class="t" style="left:138.44px;top:286.54px;font-family:'Liberation Mono',monospace;font-size:16px;line-height:16px;letter-spacing:-0.36px;color:#808080;">&lt;</div>
<div class="t" style="left:147.68px;top:286.54px;font-family:'Liberation Mono',monospace;font-size:16px;line-height:16px;letter-spacing:-0.36px;color:#569cd6;">h5</div>
<div class="t" style="left:166.16px;top:286.54px;font-family:'Liberation Mono',monospace;font-size:16px;line-height:16px;letter-spacing:-0.36px;color:#808080;">&gt;</div>
<div class="t" style="left:175.40px;top:286.54px;font-family:'Liberation Mono',monospace;font-size:16px;line-height:16px;letter-spacing:-0.36px;color:#d4d4d4;"> About </div>
<div class="t" style="left:240.08px;top:286.54px;font-family:'Liberation Mono',monospace;font-size:16px;line-height:16px;letter-spacing:-0.36px;color:#808080;">&lt;/</div>
<div class="t" style="left:258.56px;top:286.54px;font-family:'Liberation Mono',monospace;font-size:16px;line-height:16px;letter-spacing:-0.36px;color:#569cd6;">h5</div>
<div class="t" style="left:277.04px;top:286.54px;font-family:'Liberation Mono',monospace;font-size:16px;line-height:16px;letter-spacing:-0.36px;color:#808080;">&gt;</div>
<div class="t" style="left:32.52px;top:309.34px;font-family:'Liberation Mono',monospace;font-size:16px;line-height:16px;letter-spacing:-0.36px;color:#858585;">70</div>
<div class="t" style="left:138.44px;top:309.34px;font-family:'Liberation Mono',monospace;font-size:16px;line-height:16px;letter-spacing:-0.36px;color:#808080;">&lt;</div>
<div class="t" style="left:147.68px;top:309.34px;font-family:'Liberation Mono',monospace;font-size:16px;line-height:16px;letter-spacing:-0.36px;color:#569cd6;">p</div>
<div class="t" style="left:156.92px;top:309.34px;font-family:'Liberation Mono',monospace;font-size:16px;line-height:16px;letter-spacing:-0.36px;color:#808080;">&gt;</div>
<div class="t" style="left:166.16px;top:309.34px;font-family:'Liberation Mono',monospace;font-size:16px;line-height:16px;letter-spacing:-0.36px;color:#808080;">&lt;</div>
<div class="t" style="left:175.40px;top:309.34px;font-family:'Liberation Mono',monospace;font-size:16px;line-height:16px;letter-spacing:-0.36px;color:#569cd6;">a</div>
<div class="t" style="left:193.88px;top:309.34px;font-family:'Liberation Mono',monospace;font-size:16px;line-height:16px;letter-spacing:-0.36px;color:#9cdcfe;">href</div>
<div class="t" style="left:230.84px;top:309.34px;font-family:'Liberation Mono',monospace;font-size:16px;line-height:16px;letter-spacing:-0.36px;color:#d4d4d4;">=</div>
<div class="t" style="left:240.08px;top:309.34px;font-family:'Liberation Mono',monospace;font-size:16px;line-height:16px;letter-spacing:-0.36px;color:#ce9178;">&quot;</div>
<div class="t" style="left:249.32px;top:309.34px;font-family:'Liberation Mono',monospace;font-size:16px;line-height:16px;letter-spacing:-0.36px;color:#ce9178;text-decoration:underline;text-decoration-thickness:1px;text-underline-offset:5px;">mailto:hello@frontend.ro</div>
<div class="t" style="left:471.08px;top:309.34px;font-family:'Liberation Mono',monospace;font-size:16px;line-height:16px;letter-spacing:-0.36px;color:#ce9178;">&quot;</div>
<div class="t" style="left:480.32px;top:309.34px;font-family:'Liberation Mono',monospace;font-size:16px;line-height:16px;letter-spacing:-0.36px;color:#808080;">&gt;</div>
<div class="t" style="left:489.56px;top:309.34px;font-family:'Liberation Mono',monospace;font-size:16px;line-height:16px;letter-spacing:-0.36px;color:#d4d4d4;">hello@frontend.ro</div>
<div class="t" style="left:646.64px;top:309.34px;font-family:'Liberation Mono',monospace;font-size:16px;line-height:16px;letter-spacing:-0.36px;color:#808080;">&lt;/</div>
<div class="t" style="left:665.12px;top:309.34px;font-family:'Liberation Mono',monospace;font-size:16px;line-height:16px;letter-spacing:-0.36px;color:#569cd6;">a</div>
<div class="t" style="left:674.36px;top:309.34px;font-family:'Liberation Mono',monospace;font-size:16px;line-height:16px;letter-spacing:-0.36px;color:#808080;">&gt;</div>
<div class="t" style="left:683.60px;top:309.34px;font-family:'Liberation Mono',monospace;font-size:16px;line-height:16px;letter-spacing:-0.36px;color:#808080;">&lt;/</div>
<div class="t" style="left:702.08px;top:309.34px;font-family:'Liberation Mono',monospace;font-size:16px;line-height:16px;letter-spacing:-0.36px;color:#569cd6;">p</div>
<div class="t" style="left:711.32px;top:309.34px;font-family:'Liberation Mono',monospace;font-size:16px;line-height:16px;letter-spacing:-0.36px;color:#808080;">&gt;</div>
<div class="t" style="left:32.52px;top:332.14px;font-family:'Liberation Mono',monospace;font-size:16px;line-height:16px;letter-spacing:-0.36px;color:#858585;">71</div>
<div class="t" style="left:169.00px;top:81.34px;font-family:'Liberation Mono',monospace;font-size:16px;line-height:16px;letter-spacing:-0.36px;color:#5c5c5c;">You, seconds ago • Uncommitted changes</div>
</div>
<div class="r" style="left:1466px;top:104px;width:5px;height:332px;background:linear-gradient(90deg,rgba(0,0,0,0),rgba(0,0,0,0.35));"></div>
<div class="r" style="left:1583px;top:104px;width:1px;height:332px;background:#3a3a3a;"></div>
<div class="r" style="left:1584px;top:303.7px;width:5.5px;height:5.7px;background:#1b81a8;"></div>
<div class="r" style="left:1584px;top:304.6px;width:16px;height:2px;background:#a0a0a0;"></div>
<div class="r" style="left:1589.5px;top:304.6px;width:10.5px;height:2px;background:#a0a0a0;"></div>
<svg class="r" style="left:1466px;top:100px;" width="117" height="180" viewBox="1466 100 117 180"><rect x="1479.0" y="104.2" width="1" height="1.3" fill="#808080" opacity="0.48"/><rect x="1480.0" y="104.2" width="13" height="1.3" fill="#569cd6" opacity="0.48"/><rect x="1493.0" y="104.2" width="1" height="1.3" fill="#808080" opacity="0.48"/><rect x="1479.0" y="106.2" width="1" height="1.3" fill="#808080" opacity="0.48"/><rect x="1480.0" y="106.2" width="5" height="1.3" fill="#569cd6" opacity="0.48"/><rect x="1486.0" y="106.2" width="7" height="1.3" fill="#9cdcfe" opacity="0.48"/><rect x="1493.0" y="106.2" width="1" height="1.3" fill="#d4d4d4" opacity="0.48"/><rect x="1494.0" y="106.2" width="1" height="1.3" fill="#808080" opacity="0.48"/><rect x="1479.0" y="110.2" width="1" height="1.3" fill="#808080" opacity="0.48"/><rect x="1480.0" y="110.2" width="4" height="1.3" fill="#569cd6" opacity="0.48"/><rect x="1484.0" y="110.2" width="1" height="1.3" fill="#808080" opacity="0.48"/><rect x="1481.0" y="112.2" width="1" height="1.3" fill="#808080" opacity="0.48"/><rect x="1482.0" y="112.2" width="5" height="1.3" fill="#569cd6" opacity="0.48"/><rect x="1488.0" y="112.2" width="5" height="1.3" fill="#9cdcfe" opacity="0.48"/><rect x="1493.0" y="112.2" width="1" height="1.3" fill="#d4d4d4" opacity="0.48"/><rect x="1494.0" y="112.2" width="10" height="1.3" fill="#ce9178" opacity="0.48"/><rect x="1504.0" y="112.2" width="1" height="1.3" fill="#808080" opacity="0.48"/><rect x="1481.0" y="114.2" width="1" height="1.3" fill="#808080" opacity="0.48"/><rect x="1482.0" y="114.2" width="6" height="1.3" fill="#569cd6" opacity="0.48"/><rect x="1489.0" y="114.2" width="6" height="1.3" fill="#9cdcfe" opacity="0.48"/><rect x="1495.0" y="114.2" width="1" height="1.3" fill="#d4d4d4" opacity="0.48"/><rect x="1496.0" y="114.2" width="15" height="1.3" fill="#ce9178" opacity="0.48"/><rect x="1512.0" y="114.2" width="4" height="1.3" fill="#ce9178" opacity="0.48"/><rect x="1517.0" y="114.2" width="1" height="1.3" fill="#ce9178" opacity="0.48"/><rect x="1519.0" y="114.2" width="4" height="1.3" fill="#9cdcfe" opacity="0.48"/><rect x="1523.0" y="114.2" width="1" height="1.3" fill="#d4d4d4" opacity="0.48"/><rect x="1524.0" y="114.2" width="7" height="1.3" fill="#ce9178" opacity="0.48"/><rect x="1532.0" y="114.2" width="2" height="1.3" fill="#ce9178" opacity="0.48"/><rect x="1534.0" y="114.2" width="1" height="1.3" fill="#808080" opacity="0.48"/><rect x="1481.0" y="116.2" width="1" height="1.3" fill="#808080" opacity="0.48"/><rect x="1482.0" y="116.2" width="6" height="1.3" fill="#569cd6" opacity="0.48"/><rect x="1489.0" y="116.2" width="4" height="1.3" fill="#9cdcfe" opacity="0.48"/><rect x="1493.0" y="116.2" width="1" height="1.3" fill="#d4d4d4" opacity="0.48"/><rect x="1494.0" y="116.2" width="9" height="1.3" fill="#ce9178" opacity="0.48"/><rect x="1504.0" y="116.2" width="13" height="1.3" fill="#ce9178" opacity="0.48"/><rect x="1518.0" y="116.2" width="3" height="1.3" fill="#9cdcfe" opacity="0.48"/><rect x="1521.0" y="116.2" width="1" height="1.3" fill="#d4d4d4" opacity="0.48"/><rect x="1522.0" y="116.2" width="5" height="1.3" fill="#ce9178" opacity="0.48"/><rect x="1528.0" y="116.2" width="1" height="1.3" fill="#808080" opacity="0.48"/><rect x="1481.0" y="118.2" width="1" height="1.3" fill="#808080" opacity="0.48"/><rect x="1482.0" y="118.2" width="2" height="1.3" fill="#569cd6" opacity="0.48"/><rect x="1485.0" y="118.2" width="8" height="1.3" fill="#9cdcfe" opacity="0.48"/><rect x="1493.0" y="118.2" width="1" height="1.3" fill="#d4d4d4" opacity="0.48"/><rect x="1494.0" y="118.2" width="4" height="1.3" fill="#ce9178" opacity="0.48"/><rect x="1499.0" y="118.2" width="3" height="1.3" fill="#ce9178" opacity="0.48"/><rect x="1503.0" y="118.2" width="8" height="1.3" fill="#9cdcfe" opacity="0.48"/><rect x="1511.0" y="118.2" width="1" height="1.3" fill="#d4d4d4" opacity="0.48"/><rect x="1512.0" y="118.2" width="6" height="1.3" fill="#ce9178" opacity="0.48"/><rect x="1519.0" y="118.2" width="7" height="1.3" fill="#ce9178" opacity="0.48"/><rect x="1527.0" y="118.2" width="7" height="1.3" fill="#ce9178" opacity="0.48"/><rect x="1535.0" y="118.2" width="1" height="1.3" fill="#ce9178" opacity="0.48"/><rect x="1537.0" y="118.2" width="3" height="1.3" fill="#9cdcfe" opacity="0.48"/><rect x="1540.0" y="118.2" width="1" height="1.3" fill="#d4d4d4" opacity="0.48"/><rect x="1541.0" y="118.2" width="5" height="1.3" fill="#ce9178" opacity="0.48"/><rect x="1547.0" y="118.2" width="7" height="1.3" fill="#ce9178" opacity="0.48"/><rect x="1555.0" y="118.2" width="7" height="1.3" fill="#ce9178" opacity="0.48"/><rect x="1563.0" y="118.2" width="1" height="1.3" fill="#ce9178" opacity="0.48"/><rect x="1565.0" y="118.2" width="3" height="1.3" fill="#9cdcfe" opacity="0.48"/><rect x="1568.0" y="118.2" width="1" height="1.3" fill="#d4d4d4" opacity="0.48"/><rect x="1569.0" y="118.2" width="12" height="1.3" fill="#ce9178" opacity="0.48"/><rect x="1581.0" y="118.2" width="1" height="1.3" fill="#808080" opacity="0.48"/><rect x="1481.0" y="120.2" width="1" height="1.3" fill="#808080" opacity="0.48"/><rect x="1482.0" y="120.2" width="3" height="1.3" fill="#569cd6" opacity="0.48"/><rect x="1486.0" y="120.2" width="6" height="1.3" fill="#9cdcfe" opacity="0.48"/><rect x="1492.0" y="120.2" width="1" height="1.3" fill="#d4d4d4" opacity="0.48"/><rect x="1493.0" y="120.2" width="6" height="1.3" fill="#ce9178" opacity="0.48"/><rect x="1500.0" y="120.2" width="7" height="1.3" fill="#ce9178" opacity="0.48"/><rect x="1508.0" y="120.2" width="10" height="1.3" fill="#ce9178" opacity="0.48"/><rect x="1519.0" y="120.2" width="1" height="1.3" fill="#ce9178" opacity="0.48"/><rect x="1521.0" y="120.2" width="6" height="1.3" fill="#9cdcfe" opacity="0.48"/><rect x="1527.0" y="120.2" width="1" height="1.3" fill="#d4d4d4" opacity="0.48"/><rect x="1528.0" y="120.2" width="20" height="1.3" fill="#ce9178" opacity="0.48"/><rect x="1548.0" y="120.2" width="1" height="1.3" fill="#808080" opacity="0.48"/><rect x="1481.0" y="122.2" width="1" height="1.3" fill="#808080" opacity="0.48"/><rect x="1482.0" y="122.2" width="2" height="1.3" fill="#569cd6" opacity="0.48"/><rect x="1485.0" y="122.2" width="4" height="1.3" fill="#9cdcfe" opacity="0.48"/><rect x="1489.0" y="122.2" width="1" height="1.3" fill="#d4d4d4" opacity="0.48"/><rect x="1490.0" y="122.2" width="8" height="1.3" fill="#ce9178" opacity="0.48"/><rect x="1499.0" y="122.2" width="19" height="1.3" fill="#ce9178" opacity="0.48"/><rect x="1519.0" y="122.2" width="7" height="1.3" fill="#9cdcfe" opacity="0.48"/><rect x="1526.0" y="122.2" width="1" height="1.3" fill="#d4d4d4" opacity="0.48"/><rect x="1527.0" y="122.2" width="16" height="1.3" fill="#ce9178" opacity="0.48"/><rect x="1544.0" y="122.2" width="1" height="1.3" fill="#ce9178" opacity="0.48"/><rect x="1546.0" y="122.2" width="4" height="1.3" fill="#9cdcfe" opacity="0.48"/><rect x="1550.0" y="122.2" width="1" height="1.3" fill="#d4d4d4" opacity="0.48"/><rect x="1551.0" y="122.2" width="5" height="1.3" fill="#ce9178" opacity="0.48"/><rect x="1556.0" y="122.2" width="1" height="1.3" fill="#808080" opacity="0.48"/><rect x="1481.0" y="124.2" width="1" height="1.3" fill="#808080" opacity="0.48"/><rect x="1482.0" y="124.2" width="2" height="1.3" fill="#569cd6" opacity="0.48"/><rect x="1485.0" y="124.2" width="3" height="1.3" fill="#9cdcfe" opacity="0.48"/><rect x="1488.0" y="124.2" width="1" height="1.3" fill="#d4d4d4" opacity="0.48"/><rect x="1489.0" y="124.2" width="7" height="1.3" fill="#ce9178" opacity="0.48"/><rect x="1497.0" y="124.2" width="8" height="1.3" fill="#ce9178" opacity="0.48"/><rect x="1506.0" y="124.2" width="6" height="1.3" fill="#9cdcfe" opacity="0.48"/><rect x="1512.0" y="124.2" width="1" height="1.3" fill="#d4d4d4" opacity="0.48"/><rect x="1513.0" y="124.2" width="6" height="1.3" fill="#ce9178" opacity="0.48"/><rect x="1520.0" y="124.2" width="5" height="1.3" fill="#ce9178" opacity="0.48"/><rect x="1526.0" y="124.2" width="14" height="1.3" fill="#ce9178" opacity="0.48"/><rect x="1541.0" y="124.2" width="3" height="1.3" fill="#9cdcfe" opacity="0.48"/><rect x="1544.0" y="124.2" width="1" height="1.3" fill="#d4d4d4" opacity="0.48"/><rect x="1545.0" y="124.2" width="9" height="1.3" fill="#ce9178" opacity="0.48"/><rect x="1555.0" y="124.2" width="5" height="1.3" fill="#ce9178" opacity="0.48"/><rect x="1561.0" y="124.2" width="1" height="1.3" fill="#ce9178" opacity="0.48"/><rect x="1563.0" y="124.2" width="3" height="1.3" fill="#9cdcfe" opacity="0.48"/><rect x="1566.0" y="124.2" width="1" height="1.3" fill="#d4d4d4" opacity="0.48"/><rect x="1567.0" y="124.2" width="12" height="1.3" fill="#ce9178" opacity="0.48"/><rect x="1580.0" y="124.2" width="1" height="1.3" fill="#9cdcfe" opacity="0.48"/><rect x="1581.0" y="124.2" width="1" height="1.3" fill="#808080" opacity="0.48"/><rect x="1481.0" y="126.2" width="1" height="1.3" fill="#808080" opacity="0.48"/><rect x="1482.0" y="126.2" width="2" height="1.3" fill="#569cd6" opacity="0.48"/><rect x="1485.0" y="126.2" width="6" height="1.3" fill="#9cdcfe" opacity="0.48"/><rect x="1491.0" y="126.2" width="1" height="1.3" fill="#d4d4d4" opacity="0.48"/><rect x="1492.0" y="126.2" width="8" height="1.3" fill="#ce9178" opacity="0.48"/><rect x="1501.0" y="126.2" width="2" height="1.3" fill="#ce9178" opacity="0.48"/><rect x="1504.0" y="126.2" width="7" height="1.3" fill="#ce9178" opacity="0.48"/><rect x="1512.0" y="126.2" width="1" height="1.3" fill="#ce9178" opacity="0.48"/><rect x="1514.0" y="126.2" width="3" height="1.3" fill="#9cdcfe" opacity="0.48"/><rect x="1517.0" y="126.2" width="1" height="1.3" fill="#d4d4d4" opacity="0.48"/><rect x="1518.0" y="126.2" width="5" height="1.3" fill="#ce9178" opacity="0.48"/><rect x="1524.0" y="126.2" width="2" height="1.3" fill="#ce9178" opacity="0.48"/><rect x="1527.0" y="126.2" width="23" height="1.3" fill="#ce9178" opacity="0.48"/><rect x="1550.0" y="126.2" width="1" height="1.3" fill="#808080" opacity="0.48"/><rect x="1481.0" y="128.2" width="1" height="1.3" fill="#808080" opacity="0.48"/><rect x="1482.0" y="128.2" width="5" height="1.3" fill="#569cd6" opacity="0.48"/><rect x="1488.0" y="128.2" width="3" height="1.3" fill="#9cdcfe" opacity="0.48"/><rect x="1491.0" y="128.2" width="1" height="1.3" fill="#d4d4d4" opacity="0.48"/><rect x="1492.0" y="128.2" width="9" height="1.3" fill="#ce9178" opacity="0.48"/><rect x="1502.0" y="128.2" width="12" height="1.3" fill="#ce9178" opacity="0.48"/><rect x="1515.0" y="128.2" width="6" height="1.3" fill="#9cdcfe" opacity="0.48"/><rect x="1521.0" y="128.2" width="1" height="1.3" fill="#d4d4d4" opacity="0.48"/><rect x="1522.0" y="128.2" width="1" height="1.3" fill="#ce9178" opacity="0.48"/><rect x="1523.0" y="128.2" width="1" height="1.3" fill="#808080" opacity="0.48"/><rect x="1481.0" y="130.2" width="1" height="1.3" fill="#808080" opacity="0.48"/><rect x="1482.0" y="130.2" width="5" height="1.3" fill="#569cd6" opacity="0.48"/><rect x="1488.0" y="130.2" width="6" height="1.3" fill="#9cdcfe" opacity="0.48"/><rect x="1494.0" y="130.2" width="1" height="1.3" fill="#d4d4d4" opacity="0.48"/><rect x="1495.0" y="130.2" width="9" height="1.3" fill="#ce9178" opacity="0.48"/><rect x="1505.0" y="130.2" width="3" height="1.3" fill="#ce9178" opacity="0.48"/><rect x="1508.0" y="130.2" width="1" height="1.3" fill="#808080" opacity="0.48"/><rect x="1483.0" y="132.2" width="1" height="1.3" fill="#808080" opacity="0.48"/><rect x="1484.0" y="132.2" width="6" height="1.3" fill="#569cd6" opacity="0.48"/><rect x="1491.0" y="132.2" width="8" height="1.3" fill="#9cdcfe" opacity="0.48"/><rect x="1499.0" y="132.2" width="1" height="1.3" fill="#d4d4d4" opacity="0.48"/><rect x="1500.0" y="132.2" width="9" height="1.3" fill="#ce9178" opacity="0.48"/><rect x="1510.0" y="132.2" width="13" height="1.3" fill="#ce9178" opacity="0.48"/><rect x="1524.0" y="132.2" width="1" height="1.3" fill="#ce9178" opacity="0.48"/><rect x="1526.0" y="132.2" width="5" height="1.3" fill="#9cdcfe" opacity="0.48"/><rect x="1531.0" y="132.2" width="1" height="1.3" fill="#d4d4d4" opacity="0.48"/><rect x="1532.0" y="132.2" width="9" height="1.3" fill="#ce9178" opacity="0.48"/><rect x="1542.0" y="132.2" width="7" height="1.3" fill="#ce9178" opacity="0.48"/><rect x="1550.0" y="132.2" width="16" height="1.3" fill="#ce9178" opacity="0.48"/><rect x="1567.0" y="132.2" width="3" height="1.3" fill="#9cdcfe" opacity="0.48"/><rect x="1570.0" y="132.2" width="1" height="1.3" fill="#808080" opacity="0.48"/><rect x="1481.0" y="134.2" width="1" height="1.3" fill="#808080" opacity="0.48"/><rect x="1482.0" y="134.2" width="3" height="1.3" fill="#569cd6" opacity="0.48"/><rect x="1486.0" y="134.2" width="6" height="1.3" fill="#9cdcfe" opacity="0.48"/><rect x="1492.0" y="134.2" width="1" height="1.3" fill="#d4d4d4" opacity="0.48"/><rect x="1493.0" y="134.2" width="18" height="1.3" fill="#ce9178" opacity="0.48"/><rect x="1512.0" y="134.2" width="5" height="1.3" fill="#9cdcfe" opacity="0.48"/><rect x="1517.0" y="134.2" width="1" height="1.3" fill="#d4d4d4" opacity="0.48"/><rect x="1518.0" y="134.2" width="17" height="1.3" fill="#ce9178" opacity="0.48"/><rect x="1536.0" y="134.2" width="8" height="1.3" fill="#9cdcfe" opacity="0.48"/><rect x="1544.0" y="134.2" width="1" height="1.3" fill="#d4d4d4" opacity="0.48"/><rect x="1545.0" y="134.2" width="10" height="1.3" fill="#ce9178" opacity="0.48"/><rect x="1555.0" y="134.2" width="1" height="1.3" fill="#808080" opacity="0.48"/><rect x="1481.0" y="136.2" width="1" height="1.3" fill="#808080" opacity="0.48"/><rect x="1482.0" y="136.2" width="4" height="1.3" fill="#569cd6" opacity="0.48"/><rect x="1487.0" y="136.2" width="7" height="1.3" fill="#9cdcfe" opacity="0.48"/><rect x="1494.0" y="136.2" width="1" height="1.3" fill="#d4d4d4" opacity="0.48"/><rect x="1495.0" y="136.2" width="9" height="1.3" fill="#ce9178" opacity="0.48"/><rect x="1505.0" y="136.2" width="7" height="1.3" fill="#9cdcfe" opacity="0.48"/><rect x="1512.0" y="136.2" width="1" height="1.3" fill="#d4d4d4" opacity="0.48"/><rect x="1513.0" y="136.2" width="10" height="1.3" fill="#ce9178" opacity="0.48"/><rect x="1523.0" y="136.2" width="1" height="1.3" fill="#808080" opacity="0.48"/><rect x="1481.0" y="138.2" width="1" height="1.3" fill="#808080" opacity="0.48"/><rect x="1482.0" y="138.2" width="4" height="1.3" fill="#569cd6" opacity="0.48"/><rect x="1487.0" y="138.2" width="4" height="1.3" fill="#9cdcfe" opacity="0.48"/><rect x="1491.0" y="138.2" width="1" height="1.3" fill="#d4d4d4" opacity="0.48"/><rect x="1492.0" y="138.2" width="11" height="1.3" fill="#ce9178" opacity="0.48"/><rect x="1504.0" y="138.2" width="20" height="1.3" fill="#ce9178" opacity="0.48"/><rect x="1525.0" y="138.2" width="1" height="1.3" fill="#ce9178" opacity="0.48"/><rect x="1527.0" y="138.2" width="6" height="1.3" fill="#9cdcfe" opacity="0.48"/><rect x="1533.0" y="138.2" width="1" height="1.3" fill="#d4d4d4" opacity="0.48"/><rect x="1534.0" y="138.2" width="19" height="1.3" fill="#ce9178" opacity="0.48"/><rect x="1554.0" y="138.2" width="1" height="1.3" fill="#ce9178" opacity="0.48"/><rect x="1556.0" y="138.2" width="4" height="1.3" fill="#9cdcfe" opacity="0.48"/><rect x="1560.0" y="138.2" width="1" height="1.3" fill="#d4d4d4" opacity="0.48"/><rect x="1561.0" y="138.2" width="9" height="1.3" fill="#ce9178" opacity="0.48"/><rect x="1571.0" y="138.2" width="2" height="1.3" fill="#ce9178" opacity="0.48"/><rect x="1573.0" y="138.2" width="1" height="1.3" fill="#808080" opacity="0.48"/><rect x="1481.0" y="140.2" width="1" height="1.3" fill="#808080" opacity="0.48"/><rect x="1482.0" y="140.2" width="6" height="1.3" fill="#569cd6" opacity="0.48"/><rect x="1489.0" y="140.2" width="7" height="1.3" fill="#9cdcfe" opacity="0.48"/><rect x="1496.0" y="140.2" width="1" height="1.3" fill="#d4d4d4" opacity="0.48"/><rect x="1497.0" y="140.2" width="15" height="1.3" fill="#ce9178" opacity="0.48"/><rect x="1513.0" y="140.2" width="19" height="1.3" fill="#ce9178" opacity="0.48"/><rect x="1532.0" y="140.2" width="1" height="1.3" fill="#808080" opacity="0.48"/><rect x="1481.0" y="142.2" width="1" height="1.3" fill="#808080" opacity="0.48"/><rect x="1482.0" y="142.2" width="2" height="1.3" fill="#569cd6" opacity="0.48"/><rect x="1485.0" y="142.2" width="6" height="1.3" fill="#9cdcfe" opacity="0.48"/><rect x="1491.0" y="142.2" width="1" height="1.3" fill="#d4d4d4" opacity="0.48"/><rect x="1492.0" y="142.2" width="25" height="1.3" fill="#ce9178" opacity="0.48"/><rect x="1518.0" y="142.2" width="3" height="1.3" fill="#9cdcfe" opacity="0.48"/><rect x="1521.0" y="142.2" width="1" height="1.3" fill="#d4d4d4" opacity="0.48"/><rect x="1522.0" y="142.2" width="3" height="1.3" fill="#ce9178" opacity="0.48"/><rect x="1525.0" y="142.2" width="1" height="1.3" fill="#808080" opacity="0.48"/><rect x="1481.0" y="144.2" width="1" height="1.3" fill="#808080" opacity="0.48"/><rect x="1482.0" y="144.2" width="4" height="1.3" fill="#569cd6" opacity="0.48"/><rect x="1487.0" y="144.2" width="8" height="1.3" fill="#9cdcfe" opacity="0.48"/><rect x="1495.0" y="144.2" width="1" height="1.3" fill="#d4d4d4" opacity="0.48"/><rect x="1496.0" y="144.2" width="8" height="1.3" fill="#ce9178" opacity="0.48"/><rect x="1505.0" y="144.2" width="7" height="1.3" fill="#9cdcfe" opacity="0.48"/><rect x="1512.0" y="144.2" width="1" height="1.3" fill="#d4d4d4" opacity="0.48"/><rect x="1513.0" y="144.2" width="9" height="1.3" fill="#ce9178" opacity="0.48"/><rect x="1523.0" y="144.2" width="2" height="1.3" fill="#ce9178" opacity="0.48"/><rect x="1525.0" y="144.2" width="1" height="1.3" fill="#808080" opacity="0.48"/><rect x="1481.0" y="146.2" width="1" height="1.3" fill="#808080" opacity="0.48"/><rect x="1482.0" y="146.2" width="2" height="1.3" fill="#569cd6" opacity="0.48"/><rect x="1485.0" y="146.2" width="4" height="1.3" fill="#9cdcfe" opacity="0.48"/><rect x="1489.0" y="146.2" width="1" height="1.3" fill="#d4d4d4" opacity="0.48"/><rect x="1490.0" y="146.2" width="28" height="1.3" fill="#ce9178" opacity="0.48"/><rect x="1519.0" y="146.2" width="6" height="1.3" fill="#9cdcfe" opacity="0.48"/><rect x="1525.0" y="146.2" width="1" height="1.3" fill="#d4d4d4" opacity="0.48"/><rect x="1526.0" y="146.2" width="8" height="1.3" fill="#ce9178" opacity="0.48"/><rect x="1535.0" y="146.2" width="9" height="1.3" fill="#ce9178" opacity="0.48"/><rect x="1545.0" y="146.2" width="8" height="1.3" fill="#ce9178" opacity="0.48"/><rect x="1554.0" y="146.2" width="4" height="1.3" fill="#9cdcfe" opacity="0.48"/><rect x="1558.0" y="146.2" width="1" height="1.3" fill="#d4d4d4" opacity="0.48"/><rect x="1559.0" y="146.2" width="13" height="1.3" fill="#ce9178" opacity="0.48"/><rect x="1573.0" y="146.2" width="1" height="1.3" fill="#ce9178" opacity="0.48"/><rect x="1574.0" y="146.2" width="1" height="1.3" fill="#808080" opacity="0.48"/><rect x="1481.0" y="148.2" width="1" height="1.3" fill="#808080" opacity="0.48"/><rect x="1482.0" y="148.2" width="6" height="1.3" fill="#569cd6" opacity="0.48"/><rect x="1489.0" y="148.2" width="4" height="1.3" fill="#9cdcfe" opacity="0.48"/><rect x="1493.0" y="148.2" width="1" height="1.3" fill="#d4d4d4" opacity="0.48"/><rect x="1494.0" y="148.2" width="9" height="1.3" fill="#ce9178" opacity="0.48"/><rect x="1504.0" y="148.2" width="7" height="1.3" fill="#ce9178" opacity="0.48"/><rect x="1512.0" y="148.2" width="7" height="1.3" fill="#9cdcfe" opacity="0.48"/><rect x="1519.0" y="148.2" width="1" height="1.3" fill="#d4d4d4" opacity="0.48"/><rect x="1520.0" y="148.2" width="8" height="1.3" fill="#ce9178" opacity="0.48"/><rect x="1528.0" y="148.2" width="1" height="1.3" fill="#808080" opacity="0.48"/><rect x="1481.0" y="150.2" width="1" height="1.3" fill="#808080" opacity="0.48"/><rect x="1482.0" y="150.2" width="6" height="1.3" fill="#569cd6" opacity="0.48"/><rect x="1489.0" y="150.2" width="7" height="1.3" fill="#9cdcfe" opacity="0.48"/><rect x="1496.0" y="150.2" width="1" height="1.3" fill="#d4d4d4" opacity="0.48"/><rect x="1497.0" y="150.2" width="6" height="1.3" fill="#ce9178" opacity="0.48"/><rect x="1504.0" y="150.2" width="3" height="1.3" fill="#ce9178" opacity="0.48"/><rect x="1508.0" y="150.2" width="1" height="1.3" fill="#ce9178" opacity="0.48"/><rect x="1510.0" y="150.2" width="7" height="1.3" fill="#9cdcfe" opacity="0.48"/><rect x="1517.0" y="150.2" width="1" height="1.3" fill="#d4d4d4" opacity="0.48"/><rect x="1518.0" y="150.2" width="12" height="1.3" fill="#ce9178" opacity="0.48"/><rect x="1530.0" y="150.2" width="1" height="1.3" fill="#808080" opacity="0.48"/><rect x="1481.0" y="152.2" width="1" height="1.3" fill="#808080" opacity="0.48"/><rect x="1482.0" y="152.2" width="5" height="1.3" fill="#569cd6" opacity="0.48"/><rect x="1488.0" y="152.2" width="6" height="1.3" fill="#9cdcfe" opacity="0.48"/><rect x="1494.0" y="152.2" width="1" height="1.3" fill="#d4d4d4" opacity="0.48"/><rect x="1495.0" y="152.2" width="5" height="1.3" fill="#ce9178" opacity="0.48"/><rect x="1501.0" y="152.2" width="9" height="1.3" fill="#ce9178" opacity="0.48"/><rect x="1511.0" y="152.2" width="9" height="1.3" fill="#ce9178" opacity="0.48"/><rect x="1521.0" y="152.2" width="3" height="1.3" fill="#9cdcfe" opacity="0.48"/><rect x="1524.0" y="152.2" width="1" height="1.3" fill="#d4d4d4" opacity="0.48"/><rect x="1525.0" y="152.2" width="4" height="1.3" fill="#ce9178" opacity="0.48"/><rect x="1530.0" y="152.2" width="5" height="1.3" fill="#ce9178" opacity="0.48"/><rect x="1535.0" y="152.2" width="1" height="1.3" fill="#808080" opacity="0.48"/><rect x="1481.0" y="156.2" width="1" height="1.3" fill="#808080" opacity="0.48"/><rect x="1482.0" y="156.2" width="4" height="1.3" fill="#569cd6" opacity="0.48"/><rect x="1487.0" y="156.2" width="4" height="1.3" fill="#9cdcfe" opacity="0.48"/><rect x="1491.0" y="156.2" width="1" height="1.3" fill="#d4d4d4" opacity="0.48"/><rect x="1492.0" y="156.2" width="6" height="1.3" fill="#ce9178" opacity="0.48"/><rect x="1499.0" y="156.2" width="20" height="1.3" fill="#ce9178" opacity="0.48"/><rect x="1520.0" y="156.2" width="8" height="1.3" fill="#9cdcfe" opacity="0.48"/><rect x="1528.0" y="156.2" width="1" height="1.3" fill="#d4d4d4" opacity="0.48"/><rect x="1529.0" y="156.2" width="2" height="1.3" fill="#ce9178" opacity="0.48"/><rect x="1531.0" y="156.2" width="1" height="1.3" fill="#808080" opacity="0.48"/><rect x="1479.0" y="158.2" width="1" height="1.3" fill="#808080" opacity="0.48"/><rect x="1480.0" y="158.2" width="5" height="1.3" fill="#569cd6" opacity="0.48"/><rect x="1485.0" y="158.2" width="1" height="1.3" fill="#808080" opacity="0.48"/><rect x="1479.0" y="162.2" width="1" height="1.3" fill="#808080" opacity="0.48"/><rect x="1480.0" y="162.2" width="4" height="1.3" fill="#569cd6" opacity="0.48"/><rect x="1484.0" y="162.2" width="1" height="1.3" fill="#808080" opacity="0.48"/><rect x="1481.0" y="164.2" width="1" height="1.3" fill="#808080" opacity="0.48"/><rect x="1482.0" y="164.2" width="6" height="1.3" fill="#569cd6" opacity="0.48"/><rect x="1489.0" y="164.2" width="8" height="1.3" fill="#9cdcfe" opacity="0.48"/><rect x="1497.0" y="164.2" width="1" height="1.3" fill="#d4d4d4" opacity="0.48"/><rect x="1498.0" y="164.2" width="5" height="1.3" fill="#ce9178" opacity="0.48"/><rect x="1503.0" y="164.2" width="1" height="1.3" fill="#808080" opacity="0.48"/><rect x="1483.0" y="166.2" width="1" height="1.3" fill="#808080" opacity="0.48"/><rect x="1484.0" y="166.2" width="3" height="1.3" fill="#569cd6" opacity="0.48"/><rect x="1488.0" y="166.2" width="4" height="1.3" fill="#9cdcfe" opacity="0.48"/><rect x="1492.0" y="166.2" width="1" height="1.3" fill="#808080" opacity="0.48"/><rect x="1485.0" y="168.2" width="1" height="1.3" fill="#808080" opacity="0.48"/><rect x="1486.0" y="168.2" width="4" height="1.3" fill="#569cd6" opacity="0.48"/><rect x="1491.0" y="168.2" width="6" height="1.3" fill="#9cdcfe" opacity="0.48"/><rect x="1497.0" y="168.2" width="1" height="1.3" fill="#d4d4d4" opacity="0.48"/><rect x="1498.0" y="168.2" width="12" height="1.3" fill="#ce9178" opacity="0.48"/><rect x="1511.0" y="168.2" width="8" height="1.3" fill="#9cdcfe" opacity="0.48"/><rect x="1519.0" y="168.2" width="1" height="1.3" fill="#d4d4d4" opacity="0.48"/><rect x="1520.0" y="168.2" width="12" height="1.3" fill="#ce9178" opacity="0.48"/><rect x="1533.0" y="168.2" width="3" height="1.3" fill="#9cdcfe" opacity="0.48"/><rect x="1536.0" y="168.2" width="1" height="1.3" fill="#d4d4d4" opacity="0.48"/><rect x="1537.0" y="168.2" width="16" height="1.3" fill="#ce9178" opacity="0.48"/><rect x="1554.0" y="168.2" width="3" height="1.3" fill="#9cdcfe" opacity="0.48"/><rect x="1557.0" y="168.2" width="1" height="1.3" fill="#d4d4d4" opacity="0.48"/><rect x="1558.0" y="168.2" width="1" height="1.3" fill="#808080" opacity="0.48"/><rect x="1483.0" y="170.2" width="1" height="1.3" fill="#808080" opacity="0.48"/><rect x="1484.0" y="170.2" width="2" height="1.3" fill="#569cd6" opacity="0.48"/><rect x="1486.0" y="170.2" width="1" height="1.3" fill="#808080" opacity="0.48"/><rect x="1483.0" y="172.2" width="1" height="1.3" fill="#808080" opacity="0.48"/><rect x="1484.0" y="172.2" width="6" height="1.3" fill="#569cd6" opacity="0.48"/><rect x="1491.0" y="172.2" width="7" height="1.3" fill="#9cdcfe" opacity="0.48"/><rect x="1498.0" y="172.2" width="1" height="1.3" fill="#d4d4d4" opacity="0.48"/><rect x="1499.0" y="172.2" width="4" height="1.3" fill="#ce9178" opacity="0.48"/><rect x="1503.0" y="172.2" width="1" height="1.3" fill="#808080" opacity="0.48"/><rect x="1485.0" y="174.2" width="1" height="1.3" fill="#808080" opacity="0.48"/><rect x="1486.0" y="174.2" width="3" height="1.3" fill="#569cd6" opacity="0.48"/><rect x="1489.0" y="174.2" width="1" height="1.3" fill="#808080" opacity="0.48"/><rect x="1487.0" y="176.2" width="1" height="1.3" fill="#808080" opacity="0.48"/><rect x="1488.0" y="176.2" width="4" height="1.3" fill="#569cd6" opacity="0.48"/><rect x="1492.0" y="176.2" width="1" height="1.3" fill="#808080" opacity="0.48"/><rect x="1489.0" y="178.2" width="1" height="1.3" fill="#808080" opacity="0.48"/><rect x="1490.0" y="178.2" width="2" height="1.3" fill="#569cd6" opacity="0.48"/><rect x="1493.0" y="178.2" width="4" height="1.3" fill="#9cdcfe" opacity="0.48"/><rect x="1497.0" y="178.2" width="1" height="1.3" fill="#d4d4d4" opacity="0.48"/><rect x="1498.0" y="178.2" width="6" height="1.3" fill="#ce9178" opacity="0.48"/><rect x="1505.0" y="178.2" width="1" height="1.3" fill="#ce9178" opacity="0.48"/><rect x="1506.0" y="178.2" width="1" height="1.3" fill="#808080" opacity="0.48"/><rect x="1487.0" y="180.2" width="1" height="1.3" fill="#808080" opacity="0.48"/><rect x="1488.0" y="180.2" width="5" height="1.3" fill="#569cd6" opacity="0.48"/><rect x="1493.0" y="180.2" width="1" height="1.3" fill="#808080" opacity="0.48"/><rect x="1487.0" y="182.2" width="1" height="1.3" fill="#808080" opacity="0.48"/><rect x="1488.0" y="182.2" width="4" height="1.3" fill="#569cd6" opacity="0.48"/><rect x="1492.0" y="182.2" width="1" height="1.3" fill="#808080" opacity="0.48"/><rect x="1489.0" y="184.2" width="1" height="1.3" fill="#808080" opacity="0.48"/><rect x="1490.0" y="184.2" width="3" height="1.3" fill="#569cd6" opacity="0.48"/><rect x="1494.0" y="184.2" width="4" height="1.3" fill="#9cdcfe" opacity="0.48"/><rect x="1498.0" y="184.2" width="1" height="1.3" fill="#d4d4d4" opacity="0.48"/><rect x="1499.0" y="184.2" width="14" height="1.3" fill="#ce9178" opacity="0.48"/><rect x="1513.0" y="184.2" width="1" height="1.3" fill="#808080" opacity="0.48"/><rect x="1487.0" y="186.2" width="1" height="1.3" fill="#808080" opacity="0.48"/><rect x="1488.0" y="186.2" width="4" height="1.3" fill="#569cd6" opacity="0.48"/><rect x="1492.0" y="186.2" width="1" height="1.3" fill="#808080" opacity="0.48"/><rect x="1487.0" y="188.2" width="1" height="1.3" fill="#808080" opacity="0.48"/><rect x="1488.0" y="188.2" width="4" height="1.3" fill="#569cd6" opacity="0.48"/><rect x="1492.0" y="188.2" width="1" height="1.3" fill="#808080" opacity="0.48"/><rect x="1489.0" y="190.2" width="1" height="1.3" fill="#808080" opacity="0.48"/><rect x="1490.0" y="190.2" width="5" height="1.3" fill="#569cd6" opacity="0.48"/><rect x="1496.0" y="190.2" width="7" height="1.3" fill="#9cdcfe" opacity="0.48"/><rect x="1503.0" y="190.2" width="1" height="1.3" fill="#d4d4d4" opacity="0.48"/><rect x="1504.0" y="190.2" width="11" height="1.3" fill="#ce9178" opacity="0.48"/><rect x="1515.0" y="190.2" width="1" height="1.3" fill="#808080" opacity="0.48"/><rect x="1487.0" y="192.2" width="1" height="1.3" fill="#808080" opacity="0.48"/><rect x="1488.0" y="192.2" width="5" height="1.3" fill="#569cd6" opacity="0.48"/><rect x="1493.0" y="192.2" width="1" height="1.3" fill="#808080" opacity="0.48"/><rect x="1485.0" y="194.2" width="1" height="1.3" fill="#808080" opacity="0.48"/><rect x="1486.0" y="194.2" width="4" height="1.3" fill="#569cd6" opacity="0.48"/><rect x="1490.0" y="194.2" width="1" height="1.3" fill="#808080" opacity="0.48"/><rect x="1483.0" y="196.2" width="1" height="1.3" fill="#808080" opacity="0.48"/><rect x="1484.0" y="196.2" width="2" height="1.3" fill="#569cd6" opacity="0.48"/><rect x="1486.0" y="196.2" width="1" height="1.3" fill="#808080" opacity="0.48"/><rect x="1481.0" y="198.2" width="1" height="1.3" fill="#808080" opacity="0.48"/><rect x="1482.0" y="198.2" width="3" height="1.3" fill="#569cd6" opacity="0.48"/><rect x="1485.0" y="198.2" width="1" height="1.3" fill="#808080" opacity="0.48"/><rect x="1483.0" y="200.2" width="1" height="1.3" fill="#808080" opacity="0.48"/><rect x="1484.0" y="200.2" width="1" height="1.3" fill="#569cd6" opacity="0.48"/><rect x="1485.0" y="200.2" width="1" height="1.3" fill="#808080" opacity="0.48"/><rect x="1485.0" y="204.2" width="7" height="1.3" fill="#d4d4d4" opacity="0.48"/><rect x="1493.0" y="204.2" width="6" height="1.3" fill="#d4d4d4" opacity="0.48"/><rect x="1483.0" y="206.2" width="1" height="1.3" fill="#808080" opacity="0.48"/><rect x="1484.0" y="206.2" width="1" height="1.3" fill="#569cd6" opacity="0.48"/><rect x="1485.0" y="206.2" width="1" height="1.3" fill="#808080" opacity="0.48"/><rect x="1483.0" y="208.2" width="1" height="1.3" fill="#808080" opacity="0.48"/><rect x="1484.0" y="208.2" width="5" height="1.3" fill="#569cd6" opacity="0.48"/><rect x="1490.0" y="208.2" width="4" height="1.3" fill="#9cdcfe" opacity="0.48"/><rect x="1494.0" y="208.2" width="1" height="1.3" fill="#d4d4d4" opacity="0.48"/><rect x="1495.0" y="208.2" width="9" height="1.3" fill="#ce9178" opacity="0.48"/><rect x="1504.0" y="208.2" width="1" height="1.3" fill="#808080" opacity="0.48"/><rect x="1485.0" y="210.2" width="2" height="1.3" fill="#d4d4d4" opacity="0.48"/><rect x="1488.0" y="210.2" width="5" height="1.3" fill="#d4d4d4" opacity="0.48"/><rect x="1494.0" y="210.2" width="6" height="1.3" fill="#d4d4d4" opacity="0.48"/><rect x="1501.0" y="210.2" width="6" height="1.3" fill="#d4d4d4" opacity="0.48"/><rect x="1508.0" y="210.2" width="7" height="1.3" fill="#d4d4d4" opacity="0.48"/><rect x="1516.0" y="210.2" width="5" height="1.3" fill="#d4d4d4" opacity="0.48"/><rect x="1522.0" y="210.2" width="8" height="1.3" fill="#d4d4d4" opacity="0.48"/><rect x="1531.0" y="210.2" width="4" height="1.3" fill="#d4d4d4" opacity="0.48"/><rect x="1536.0" y="210.2" width="3" height="1.3" fill="#d4d4d4" opacity="0.48"/><rect x="1540.0" y="210.2" width="5" height="1.3" fill="#d4d4d4" opacity="0.48"/><rect x="1485.0" y="212.2" width="9" height="1.3" fill="#d4d4d4" opacity="0.48"/><rect x="1495.0" y="212.2" width="5" height="1.3" fill="#d4d4d4" opacity="0.48"/><rect x="1501.0" y="212.2" width="3" height="1.3" fill="#d4d4d4" opacity="0.48"/><rect x="1505.0" y="212.2" width="8" height="1.3" fill="#d4d4d4" opacity="0.48"/><rect x="1514.0" y="212.2" width="2" height="1.3" fill="#d4d4d4" opacity="0.48"/><rect x="1517.0" y="212.2" width="3" height="1.3" fill="#d4d4d4" opacity="0.48"/><rect x="1521.0" y="212.2" width="1" height="1.3" fill="#d4d4d4" opacity="0.48"/><rect x="1483.0" y="214.2" width="1" height="1.3" fill="#808080" opacity="0.48"/><rect x="1484.0" y="214.2" width="2" height="1.3" fill="#569cd6" opacity="0.48"/><rect x="1486.0" y="214.2" width="1" height="1.3" fill="#808080" opacity="0.48"/><rect x="1483.0" y="218.2" width="1" height="1.3" fill="#808080" opacity="0.48"/><rect x="1484.0" y="218.2" width="2" height="1.3" fill="#569cd6" opacity="0.48"/><rect x="1486.0" y="218.2" width="1" height="1.3" fill="#808080" opacity="0.48"/><rect x="1481.0" y="222.2" width="1" height="1.3" fill="#808080" opacity="0.48"/><rect x="1482.0" y="222.2" width="3" height="1.3" fill="#569cd6" opacity="0.48"/><rect x="1485.0" y="222.2" width="1" height="1.3" fill="#808080" opacity="0.48"/><rect x="1481.0" y="224.2" width="1" height="1.3" fill="#808080" opacity="0.48"/><rect x="1482.0" y="224.2" width="3" height="1.3" fill="#569cd6" opacity="0.48"/><rect x="1485.0" y="224.2" width="1" height="1.3" fill="#808080" opacity="0.48"/><rect x="1481.0" y="226.2" width="1" height="1.3" fill="#808080" opacity="0.48"/><rect x="1482.0" y="226.2" width="3" height="1.3" fill="#569cd6" opacity="0.48"/><rect x="1486.0" y="226.2" width="5" height="1.3" fill="#9cdcfe" opacity="0.48"/><rect x="1491.0" y="226.2" width="1" height="1.3" fill="#d4d4d4" opacity="0.48"/><rect x="1492.0" y="226.2" width="11" height="1.3" fill="#ce9178" opacity="0.48"/><rect x="1503.0" y="226.2" width="1" height="1.3" fill="#808080" opacity="0.48"/><rect x="1483.0" y="228.2" width="1" height="1.3" fill="#808080" opacity="0.48"/><rect x="1484.0" y="228.2" width="4" height="1.3" fill="#569cd6" opacity="0.48"/><rect x="1489.0" y="228.2" width="5" height="1.3" fill="#9cdcfe" opacity="0.48"/><rect x="1494.0" y="228.2" width="1" height="1.3" fill="#d4d4d4" opacity="0.48"/><rect x="1495.0" y="228.2" width="9" height="1.3" fill="#ce9178" opacity="0.48"/><rect x="1504.0" y="228.2" width="1" height="1.3" fill="#808080" opacity="0.48"/><rect x="1485.0" y="230.2" width="1" height="1.3" fill="#808080" opacity="0.48"/><rect x="1486.0" y="230.2" width="2" height="1.3" fill="#569cd6" opacity="0.48"/><rect x="1489.0" y="230.2" width="8" height="1.3" fill="#9cdcfe" opacity="0.48"/><rect x="1497.0" y="230.2" width="1" height="1.3" fill="#d4d4d4" opacity="0.48"/><rect x="1498.0" y="230.2" width="1" height="1.3" fill="#ce9178" opacity="0.48"/><rect x="1499.0" y="230.2" width="1" height="1.3" fill="#808080" opacity="0.48"/><rect x="1485.0" y="232.2" width="1" height="1.3" fill="#808080" opacity="0.48"/><rect x="1486.0" y="232.2" width="5" height="1.3" fill="#569cd6" opacity="0.48"/><rect x="1492.0" y="232.2" width="4" height="1.3" fill="#9cdcfe" opacity="0.48"/><rect x="1496.0" y="232.2" width="1" height="1.3" fill="#d4d4d4" opacity="0.48"/><rect x="1497.0" y="232.2" width="7" height="1.3" fill="#ce9178" opacity="0.48"/><rect x="1504.0" y="232.2" width="1" height="1.3" fill="#808080" opacity="0.48"/><rect x="1485.0" y="234.2" width="1" height="1.3" fill="#808080" opacity="0.48"/><rect x="1486.0" y="234.2" width="5" height="1.3" fill="#569cd6" opacity="0.48"/><rect x="1492.0" y="234.2" width="6" height="1.3" fill="#9cdcfe" opacity="0.48"/><rect x="1498.0" y="234.2" width="1" height="1.3" fill="#d4d4d4" opacity="0.48"/><rect x="1499.0" y="234.2" width="8" height="1.3" fill="#ce9178" opacity="0.48"/><rect x="1507.0" y="234.2" width="1" height="1.3" fill="#808080" opacity="0.48"/><rect x="1483.0" y="236.2" width="1" height="1.3" fill="#808080" opacity="0.48"/><rect x="1484.0" y="236.2" width="4" height="1.3" fill="#569cd6" opacity="0.48"/><rect x="1488.0" y="236.2" width="1" height="1.3" fill="#808080" opacity="0.48"/><rect x="1483.0" y="238.2" width="1" height="1.3" fill="#808080" opacity="0.48"/><rect x="1484.0" y="238.2" width="3" height="1.3" fill="#569cd6" opacity="0.48"/><rect x="1487.0" y="238.2" width="1" height="1.3" fill="#808080" opacity="0.48"/><rect x="1485.0" y="240.2" width="1" height="1.3" fill="#808080" opacity="0.48"/><rect x="1486.0" y="240.2" width="4" height="1.3" fill="#569cd6" opacity="0.48"/><rect x="1491.0" y="240.2" width="3" height="1.3" fill="#9cdcfe" opacity="0.48"/><rect x="1494.0" y="240.2" width="1" height="1.3" fill="#808080" opacity="0.48"/><rect x="1485.0" y="242.2" width="1" height="1.3" fill="#808080" opacity="0.48"/><rect x="1486.0" y="242.2" width="2" height="1.3" fill="#569cd6" opacity="0.48"/><rect x="1489.0" y="242.2" width="8" height="1.3" fill="#9cdcfe" opacity="0.48"/><rect x="1497.0" y="242.2" width="1" height="1.3" fill="#d4d4d4" opacity="0.48"/><rect x="1498.0" y="242.2" width="11" height="1.3" fill="#ce9178" opacity="0.48"/><rect x="1510.0" y="242.2" width="1" height="1.3" fill="#ce9178" opacity="0.48"/><rect x="1512.0" y="242.2" width="5" height="1.3" fill="#9cdcfe" opacity="0.48"/><rect x="1517.0" y="242.2" width="1" height="1.3" fill="#d4d4d4" opacity="0.48"/><rect x="1518.0" y="242.2" width="6" height="1.3" fill="#ce9178" opacity="0.48"/><rect x="1525.0" y="242.2" width="11" height="1.3" fill="#ce9178" opacity="0.48"/><rect x="1536.0" y="242.2" width="1" height="1.3" fill="#808080" opacity="0.48"/><rect x="1487.0" y="244.2" width="3" height="1.3" fill="#d4d4d4" opacity="0.48"/><rect x="1491.0" y="244.2" width="9" height="1.3" fill="#d4d4d4" opacity="0.48"/><rect x="1501.0" y="244.2" width="4" height="1.3" fill="#d4d4d4" opacity="0.48"/><rect x="1506.0" y="244.2" width="5" height="1.3" fill="#d4d4d4" opacity="0.48"/><rect x="1512.0" y="244.2" width="3" height="1.3" fill="#d4d4d4" opacity="0.48"/><rect x="1516.0" y="244.2" width="2" height="1.3" fill="#d4d4d4" opacity="0.48"/><rect x="1519.0" y="244.2" width="6" height="1.3" fill="#d4d4d4" opacity="0.48"/><rect x="1483.0" y="246.2" width="1" height="1.3" fill="#808080" opacity="0.48"/><rect x="1484.0" y="246.2" width="4" height="1.3" fill="#569cd6" opacity="0.48"/><rect x="1488.0" y="246.2" width="1" height="1.3" fill="#808080" opacity="0.48"/><rect x="1483.0" y="248.2" width="1" height="1.3" fill="#808080" opacity="0.48"/><rect x="1484.0" y="248.2" width="5" height="1.3" fill="#569cd6" opacity="0.48"/><rect x="1490.0" y="248.2" width="3" height="1.3" fill="#9cdcfe" opacity="0.48"/><rect x="1493.0" y="248.2" width="1" height="1.3" fill="#d4d4d4" opacity="0.48"/><rect x="1494.0" y="248.2" width="5" height="1.3" fill="#ce9178" opacity="0.48"/><rect x="1499.0" y="248.2" width="1" height="1.3" fill="#808080" opacity="0.48"/><rect x="1485.0" y="250.2" width="1" height="1.3" fill="#808080" opacity="0.48"/><rect x="1486.0" y="250.2" width="4" height="1.3" fill="#569cd6" opacity="0.48"/><rect x="1491.0" y="250.2" width="3" height="1.3" fill="#9cdcfe" opacity="0.48"/><rect x="1494.0" y="250.2" width="1" height="1.3" fill="#808080" opacity="0.48"/><rect x="1485.0" y="252.2" width="1" height="1.3" fill="#808080" opacity="0.48"/><rect x="1486.0" y="252.2" width="2" height="1.3" fill="#569cd6" opacity="0.48"/><rect x="1488.0" y="252.2" width="1" height="1.3" fill="#808080" opacity="0.48"/><rect x="1487.0" y="254.2" width="1" height="1.3" fill="#808080" opacity="0.48"/><rect x="1488.0" y="254.2" width="6" height="1.3" fill="#569cd6" opacity="0.48"/><rect x="1495.0" y="254.2" width="8" height="1.3" fill="#9cdcfe" opacity="0.48"/><rect x="1503.0" y="254.2" width="1" height="1.3" fill="#d4d4d4" opacity="0.48"/><rect x="1504.0" y="254.2" width="21" height="1.3" fill="#ce9178" opacity="0.48"/><rect x="1526.0" y="254.2" width="1" height="1.3" fill="#ce9178" opacity="0.48"/><rect x="1528.0" y="254.2" width="6" height="1.3" fill="#9cdcfe" opacity="0.48"/><rect x="1534.0" y="254.2" width="1" height="1.3" fill="#d4d4d4" opacity="0.48"/><rect x="1535.0" y="254.2" width="5" height="1.3" fill="#ce9178" opacity="0.48"/><rect x="1540.0" y="254.2" width="1" height="1.3" fill="#808080" opacity="0.48"/><rect x="1487.0" y="256.2" width="1" height="1.3" fill="#808080" opacity="0.48"/><rect x="1488.0" y="256.2" width="4" height="1.3" fill="#569cd6" opacity="0.48"/><rect x="1493.0" y="256.2" width="5" height="1.3" fill="#9cdcfe" opacity="0.48"/><rect x="1498.0" y="256.2" width="1" height="1.3" fill="#d4d4d4" opacity="0.48"/><rect x="1499.0" y="256.2" width="17" height="1.3" fill="#ce9178" opacity="0.48"/><rect x="1517.0" y="256.2" width="4" height="1.3" fill="#9cdcfe" opacity="0.48"/><rect x="1521.0" y="256.2" width="1" height="1.3" fill="#d4d4d4" opacity="0.48"/><rect x="1522.0" y="256.2" width="8" height="1.3" fill="#ce9178" opacity="0.48"/><rect x="1530.0" y="256.2" width="1" height="1.3" fill="#808080" opacity="0.48"/><rect x="1487.0" y="258.2" width="1" height="1.3" fill="#808080" opacity="0.48"/><rect x="1488.0" y="258.2" width="2" height="1.3" fill="#569cd6" opacity="0.48"/><rect x="1491.0" y="258.2" width="3" height="1.3" fill="#9cdcfe" opacity="0.48"/><rect x="1494.0" y="258.2" width="1" height="1.3" fill="#d4d4d4" opacity="0.48"/><rect x="1495.0" y="258.2" width="11" height="1.3" fill="#ce9178" opacity="0.48"/><rect x="1507.0" y="258.2" width="4" height="1.3" fill="#ce9178" opacity="0.48"/><rect x="1512.0" y="258.2" width="3" height="1.3" fill="#9cdcfe" opacity="0.48"/><rect x="1515.0" y="258.2" width="1" height="1.3" fill="#d4d4d4" opacity="0.48"/><rect x="1516.0" y="258.2" width="16" height="1.3" fill="#ce9178" opacity="0.48"/><rect x="1532.0" y="258.2" width="1" height="1.3" fill="#808080" opacity="0.48"/><rect x="1485.0" y="260.2" width="1" height="1.3" fill="#808080" opacity="0.48"/><rect x="1486.0" y="260.2" width="3" height="1.3" fill="#569cd6" opacity="0.48"/><rect x="1489.0" y="260.2" width="1" height="1.3" fill="#808080" opacity="0.48"/><rect x="1483.0" y="262.2" width="1" height="1.3" fill="#808080" opacity="0.48"/><rect x="1484.0" y="262.2" width="4" height="1.3" fill="#569cd6" opacity="0.48"/><rect x="1488.0" y="262.2" width="1" height="1.3" fill="#808080" opacity="0.48"/><rect x="1481.0" y="264.2" width="1" height="1.3" fill="#808080" opacity="0.48"/><rect x="1482.0" y="264.2" width="5" height="1.3" fill="#569cd6" opacity="0.48"/><rect x="1487.0" y="264.2" width="1" height="1.3" fill="#808080" opacity="0.48"/><rect x="1479.0" y="266.2" width="1" height="1.3" fill="#808080" opacity="0.48"/><rect x="1480.0" y="266.2" width="5" height="1.3" fill="#569cd6" opacity="0.48"/><rect x="1485.0" y="266.2" width="1" height="1.3" fill="#808080" opacity="0.48"/><rect x="1479.0" y="270.2" width="1" height="1.3" fill="#808080" opacity="0.48"/><rect x="1480.0" y="270.2" width="5" height="1.3" fill="#569cd6" opacity="0.48"/><rect x="1485.0" y="270.2" width="1" height="1.3" fill="#808080" opacity="0.48"/><rect x="1479" y="222.2" width="103" height="1.8" fill="#264f78" opacity="0.9"/><rect x="1473" y="221.8" width="2.4" height="2.4" fill="#1b81a8"/></svg>
<div class="r" style="left:446px;top:436px;width:1154px;height:1px;background:#414141;"></div>
<div class="t" style="left:470.40px;top:452.59px;font-size:12px;line-height:12px;color:#a5a5a5;letter-spacing:-0.15px;">PROBLEMS</div>
<div class="t" style="left:558.50px;top:452.59px;font-size:12px;line-height:12px;color:#a5a5a5;letter-spacing:-0.1px;">OUTPUT</div>
<div class="t" style="left:632.00px;top:452.59px;font-size:12px;line-height:12px;color:#a5a5a5;letter-spacing:-0.15px;">DEBUG CONSOLE</div>
<div class="t" style="left:758.50px;top:452.59px;font-size:12px;line-height:12px;color:#e7e7e7;letter-spacing:-0.05px;">TERMINAL</div>
<div class="r" style="left:758px;top:473px;width:62px;height:1.2px;background:#e7e7e7;"></div>
<div class="r" style="left:1182px;top:444px;width:204px;height:28px;background:#3c3c3c;"></div>
<div class="t" style="left:1192.60px;top:450.79px;font-size:15.6px;line-height:15.6px;color:#f0f0f0;">2: bash</div>
<svg class="r" style="left:1350px;top:440px;" width="240" height="30" viewBox="1350 440 240 30"><path d="M1365,454 L1370.3,459.6 L1375.6,454" fill="none" stroke="#cccccc" stroke-width="1.3"/>
<path d="M1414.2,449.5 V465 M1406.5,457.2 H1422" stroke="#cccccc" stroke-width="1.5"/>
<g fill="none" stroke="#cccccc" stroke-width="1.4"><rect x="1446" y="450.3" width="15" height="14" rx="1.5"/><path d="M1453.5,450.3 V464.3"/></g>
<g fill="none" stroke="#cccccc" stroke-width="1.4"><path d="M1484.4,451.6 H1498 M1488.5,451.6 V449.2 H1494 V451.6 M1486,451.6 V464.4 H1496.5 V451.6 M1489,454.5 V461.8 M1491.3,454.5 V461.8 M1493.6,454.5 V461.8"/></g>
<path d="M1524.2,460 L1530,454 L1535.8,460" fill="none" stroke="#cccccc" stroke-width="1.4"/>
<path d="M1562.8,452 L1574,463.2 M1574,452 L1562.8,463.2" stroke="#cccccc" stroke-width="1.4"/></svg>
<div class="t" style="left:470.00px;top:493.80px;font-family:'Liberation Mono',monospace;font-size:15.4px;line-height:15.4px;letter-spacing:-0.24px;color:#cccccc;">$ git diff</div>
<div class="t" style="left:470.00px;top:513.80px;font-family:'Liberation Mono',monospace;font-size:15.4px;line-height:15.4px;letter-spacing:-0.24px;color:#e5e5e5;font-weight:700;">diff --git a/exercitii.html b/exercitii.html</div>
<div class="t" style="left:470.00px;top:533.80px;font-family:'Liberation Mono',monospace;font-size:15.4px;line-height:15.4px;letter-spacing:-0.24px;color:#e5e5e5;font-weight:700;">index 0a9b90b..c076387 100644</div>
<div class="t" style="left:470.00px;top:553.80px;font-family:'Liberation Mono',monospace;font-size:15.4px;line-height:15.4px;letter-spacing:-0.24px;color:#e5e5e5;font-weight:700;">--- a/exercitii.html</div>
<div class="t" style="left:470.00px;top:573.80px;font-family:'Liberation Mono',monospace;font-size:15.4px;line-height:15.4px;letter-spacing:-0.24px;color:#e5e5e5;font-weight:700;">+++ b/exercitii.html</div>
<div class="t" style="left:470.00px;top:593.80px;font-family:'Liberation Mono',monospace;font-size:15.4px;line-height:15.4px;letter-spacing:-0.24px;color:#11a8cd;">@@ -57,9 +57,7 @@</div>
<div class="t" style="left:515.00px;top:633.80px;font-family:'Liberation Mono',monospace;font-size:15.4px;line-height:15.4px;letter-spacing:-0.24px;color:#cccccc;">&lt;hr&gt;</div>
<div class="t" style="left:470.00px;top:673.80px;font-family:'Liberation Mono',monospace;font-size:15.4px;line-height:15.4px;letter-spacing:-0.24px;color:#e31c1c;">-</div>
<div class="t" style="left:515.00px;top:673.80px;font-family:'Liberation Mono',monospace;font-size:15.4px;line-height:15.4px;letter-spacing:-0.24px;color:#e31c1c;">&lt;div class=&quot;exercises-grid&quot;&gt;</div>
<div class="t" style="left:470.00px;top:693.80px;font-family:'Liberation Mono',monospace;font-size:15.4px;line-height:15.4px;letter-spacing:-0.24px;color:#e31c1c;">-</div>
<div class="t" style="left:533.00px;top:693.80px;font-family:'Liberation Mono',monospace;font-size:15.4px;line-height:15.4px;letter-spacing:-0.24px;color:#e31c1c;">&lt;!-- Add &quot;div&quot; elements here for the cells --&gt;</div>
<div class="t" style="left:470.00px;top:713.80px;font-family:'Liberation Mono',monospace;font-size:15.4px;line-height:15.4px;letter-spacing:-0.24px;color:#e31c1c;">-</div>
<div class="t" style="left:515.00px;top:713.80px;font-family:'Liberation Mono',monospace;font-size:15.4px;line-height:15.4px;letter-spacing:-0.24px;color:#e31c1c;">&lt;/div&gt;</div>
<div class="t" style="left:470.00px;top:733.80px;font-family:'Liberation Mono',monospace;font-size:15.4px;line-height:15.4px;letter-spacing:-0.24px;color:#23c47e;">+</div>
<div class="r" style="left:479px;top:732px;width:27px;height:20px;background:#e31c1c;"></div>
<div class="t" style="left:497.00px;top:753.80px;font-family:'Liberation Mono',monospace;font-size:15.4px;line-height:15.4px;letter-spacing:-0.24px;color:#cccccc;">&lt;/main&gt;</div>
<div class="t" style="left:497.00px;top:773.80px;font-family:'Liberation Mono',monospace;font-size:15.4px;line-height:15.4px;letter-spacing:-0.24px;color:#cccccc;">&lt;footer class=&quot;footer&quot;&gt;</div>
<div class="t" style="left:515.00px;top:793.80px;font-family:'Liberation Mono',monospace;font-size:15.4px;line-height:15.4px;letter-spacing:-0.24px;color:#cccccc;">&lt;section class=&quot;branding&quot;&gt;</div>
<div class="r" style="left:1588px;top:762px;width:12px;height:61px;background:#4f4f4f;"></div>
<svg class="r" style="left:0px;top:834px;" width="1600" height="26" viewBox="0 834 1600 26"><path d="M15,844.3 L20.2,848.4 L15,852.5 M25.6,841 L20.2,844.4 L25.6,847.8" fill="none" stroke="#ffffff" stroke-width="1.3"/>
<g fill="none" stroke="#ffffff" stroke-width="1.4">
<circle cx="55.3" cy="840.9" r="2"/><circle cx="55.3" cy="852.3" r="2"/><circle cx="64.6" cy="844.2" r="2"/>
<path d="M55.3,843 V850.2 M64.6,846.2 Q64.6,849.5 56,850.5"/>
</g>
<g fill="none" stroke="#ffffff" stroke-width="1.5">
<path d="M142.5,845.5 A6.3,6.3 0 0 1 154.5,844.8 M155.2,849.5 A6.3,6.3 0 0 1 143,850.2"/>
<path d="M152,843.5 L155,845.3 L156.2,842" stroke-width="1.3"/>
<path d="M145.6,851.4 L142.6,849.7 L141.6,853" stroke-width="1.3"/>
</g>
<g fill="none" stroke="#ffffff" stroke-width="1.3">
<circle cx="184.4" cy="846.3" r="7.1"/><path d="M181.4,843.3 L187.4,849.3 M187.4,843.3 L181.4,849.3"/>
<path d="M216.5,839.3 L224.2,853.3 H208.8 Z" stroke-linejoin="round"/><path d="M216.5,844 V849.5 M216.5,850.8 V852"/>
</g>
<g fill="none" stroke="#ffffff" stroke-width="1.4">
<circle cx="801.3" cy="846" r="3.3"/><path d="M801.3,838 V842.7 M801.3,849.3 V854"/>
</g>
<g fill="none" stroke="#ffffff" stroke-width="1.3">
<path d="M1282,850 A6.4,6.4 0 1 1 1290,850 M1283.8,847.6 A3.6,3.6 0 1 1 1288.2,847.6"/><circle cx="1286" cy="845" r="1.2" fill="#ffffff"/><path d="M1286,846 V853.5" stroke-width="2"/>
<path d="M1364.6,847.5 L1368.2,851.3 L1375,841.3 M1371.6,848.8 L1373.2,851.3 L1380,841.3"/>
<path d="M1442.8,847.5 L1446.4,851.3 L1453.2,841.3 M1449.8,848.8 L1451.4,851.3 L1458.2,841.3"/>
<path d="M1534.6,841.8 V839.6 H1544.8 V846.2 H1542.3 L1540.4,848.2 V846.4"/>
<circle cx="1535.3" cy="845.8" r="2.9"/>
<path d="M1530.3,853.6 A5,4.6 0 0 1 1540.3,853.6"/>
<path d="M1567.6,851 H1579.4 Q1578.2,849.5 1578.2,846.5 V844.5 Q1578.2,839.4 1573.5,839.4 Q1568.8,839.4 1568.8,844.5 V846.5 Q1568.8,849.5 1567.6,851 Z" stroke-linejoin="round"/>
<path d="M1572,852.2 Q1573.5,854.2 1575,852.2"/>
</g></svg>
<div class="t" style="left:71.50px;top:840.58px;font-size:14.2px;line-height:14.2px;color:#ffffff;letter-spacing:0px;">master*</div>
<div class="t" style="left:196.50px;top:840.58px;font-size:14.2px;line-height:14.2px;color:#ffffff;letter-spacing:0px;">0</div>
<div class="t" style="left:228.50px;top:840.58px;font-size:14.2px;line-height:14.2px;color:#ffffff;letter-spacing:0px;">0</div>
<div class="t" style="left:813.00px;top:840.58px;font-size:14.2px;line-height:14.2px;color:#ffffff;letter-spacing:-0.24px;">You, seconds ago</div>
<div class="t" style="left:941.80px;top:840.58px;font-size:14.2px;line-height:14.2px;color:#ffffff;letter-spacing:-0.155px;">Ln 60, Col 4</div>
<div class="t" style="left:1035.50px;top:840.58px;font-size:14.2px;line-height:14.2px;color:#ffffff;letter-spacing:-0.56px;">Spaces: 2</div>
<div class="t" style="left:1113.00px;top:840.58px;font-size:14.2px;line-height:14.2px;color:#ffffff;letter-spacing:-0.42px;">UTF-8</div>
<div class="t" style="left:1169.80px;top:840.58px;font-size:14.2px;line-height:14.2px;color:#ffffff;letter-spacing:0px;transform:scaleX(0.838);transform-origin:0 0;">CRLF</div>
<div class="t" style="left:1220.50px;top:840.58px;font-size:14.2px;line-height:14.2px;color:#ffffff;letter-spacing:-0.37px;">HTML</div>
<div class="t" style="left:1297.50px;top:840.58px;font-size:14.2px;line-height:14.2px;color:#ffffff;letter-spacing:-0.38px;">Go Live</div>
<div class="t" style="left:1384.80px;top:840.58px;font-size:14.2px;line-height:14.2px;color:#ffffff;letter-spacing:-0.62px;">ESLint</div>
<div class="t" style="left:1463.50px;top:840.58px;font-size:14.2px;line-height:14.2px;color:#ffffff;letter-spacing:0.07px;">Prettier</div>
<div class="r" style="left:197px;top:860px;width:48px;height:40px;background:#4d5c65;"></div>
<div class="r" style="left:152px;top:898px;width:40px;height:2px;background:#76b9ed;"></div>
<div class="r" style="left:197px;top:898px;width:48px;height:2px;background:#76b9ed;"></div>
<div class="r" style="left:250px;top:898px;width:31px;height:2px;background:#76b9ed;"></div>
<div class="r" style="left:348px;top:898px;width:31px;height:2px;background:#76b9ed;"></div>
<div class="r" style="left:282px;top:898px;width:8px;height:2px;background:#4f7c9c;"></div>
<div class="r" style="left:380px;top:898px;width:8px;height:2px;background:#4f7c9c;"></div>
<svg class="r" style="left:0px;top:860px;" width="1600" height="40" viewBox="0 860 1600 40"><path d="M15.6,873.8 L22.8,872.8 V879.5 H15.6 Z M23.8,872.6 L32.3,871.6 V879.5 H23.8 Z M15.6,880.5 H22.8 V887.2 L15.6,886.2 Z M23.8,880.5 H32.3 V888.3 L23.8,887.3 Z" fill="#ffffff"/>
<circle cx="74.4" cy="877.3" r="5.6" fill="none" stroke="#ffffff" stroke-width="1.2"/><path d="M70.3,881.5 L64.4,887.8" stroke="#ffffff" stroke-width="1.3"/>
<path d="M112,872.5 Q112,870.6 113.8,870.6 H120.5 L122.5,872.5 H133.3 V888.5 H112 Z" fill="#f4c142"/>
<rect x="112" y="874.6" width="21.5" height="14" fill="#ffd866"/>
<path d="M116.4,888.7 V881 H129.5 V888.7 H126.6 V884 H119.4 V888.7 Z" fill="#3c8fd8"/>
<defs><linearGradient id="eg" x1="0" y1="0" x2="1" y2="0.6"><stop offset="0" stop-color="#33b7f0"/><stop offset="0.55" stop-color="#2cc3c8"/><stop offset="1" stop-color="#6ae25a"/></linearGradient></defs>
<path d="M172,868 A12,12 0 0 0 160.1,880 A12,12 0 0 0 172,892 Q178.5,892 182.4,886.8 Q177,888.5 173.5,886 Q169.5,882.5 171.5,878.5 Q166,874.5 160.6,877.2 Q163,868 172,868 Z" fill="#1a7fd8"/>
<path d="M160.5,877.3 Q162.5,868 172,868 Q183.2,868 184.1,879.5 Q184.1,884.6 178.8,884.6 Q174.4,884.6 173.6,881.6 Q173.6,875.8 166.8,875.4 Q162.6,875.4 160.5,877.3 Z" fill="url(#eg)"/>
<path d="M167.6,881.8 Q167.8,889.6 175.6,889.6 Q179.8,889.6 182.3,886.6 Q177.5,887.8 174.5,885.6 Q171.2,883 171.6,878.6 Q168.2,878.6 167.6,881.8 Z" fill="#0b53a6"/>
<path d="M171.5,878.5 Q173.4,878.2 173.6,881.6 Q174.4,884.6 178.8,884.6 Q176,885.6 173.8,884.6 Q171,883 171.5,878.5 Z" fill="#21344a"/>
<g transform="translate(209,868) scale(1.25)"><path d="M14.5,0 L19.1,2.3 V17.1 L14.5,19.2 Z" fill="#24aaf2"/><path d="M14.6,0.1 V4.9 L1.7,14.5 L0,13.2 Z" fill="#0e87d8"/><path d="M0,6.3 L1.7,5.1 L14.6,14.6 V19.2 Z" fill="#1a95e4"/></g>
<path d="M269.8,879.8 L269.8,874.7 L279.55,874.7 A11,11 0 0 0 260.47,873.97 L265.5,882.3 Z" fill="#db4437"/>
<path d="M265.5,882.3 L260.47,873.97 A11,11 0 0 0 269.22,890.78 L274.1,882.3 Z" fill="#0f9d58"/>
<path d="M274.1,882.3 L269.22,890.78 A11,11 0 0 0 279.55,874.7 L269.8,874.7 Z" fill="#fcc934"/>
<circle cx="269.8" cy="879.8" r="5.1" fill="#ffffff"/><circle cx="269.8" cy="879.8" r="4.1" fill="#4a8af4"/>
<defs><linearGradient id="npg" x1="0" y1="0" x2="1" y2="0.3"><stop offset="0" stop-color="#1f7f98"/><stop offset="0.35" stop-color="#6fbcd2"/><stop offset="1" stop-color="#a8dbe8"/></linearGradient></defs>
<path d="M327.8,871.7 L329.2,872.2 L328.8,888.8 L323.8,890.2 L320.8,887.2 Z" fill="#e4ecef"/>
<path d="M328.9,872.5 L330.3,873.2 L330,887.6 L328.8,888.4 Z" fill="#c8962b"/>
<path d="M315.2,869.3 L327.8,871.7 L321.2,887.1 L307.3,884.6 Z" fill="url(#npg)"/>
<path d="M315.2,869.3 L327.8,871.7 L327.2,873.2 L314.6,870.8 Z" fill="#d8dcdd"/>
<path d="M307.3,884.6 L321.2,887.1 L322.2,888.6 L308.5,886 Z" fill="#cfe3ea"/>
<rect x="356.7" y="868.9" width="22.3" height="21.9" rx="1.2" fill="#fccf14"/>
<path d="M367.5,890.8 V882.5 Q367.5,880 370,880 H379 Z" fill="#3a3a36"/>
<path d="M369.5,890.8 L379,881.8 V889.6 Q379,890.8 377.8,890.8 Z" fill="#e7b512"/>
<path d="M1355.5,883.5 L1361,878 L1366.5,883.5" fill="none" stroke="#ffffff" stroke-width="1.2"/>
<g fill="none" stroke="#ffffff" stroke-width="1.2">
<rect x="1381.5" y="878.5" width="11" height="7" /><path d="M1393.5,880.5 V883.5 M1377.5,876 V879 M1380,876 V879 M1376.5,879 H1381 V881.5 Q1378.5,883.5 1376.5,881.5 Z M1378.5,883 V886"/>
</g>
<rect x="1382.5" y="879.5" width="9" height="5" fill="#ffffff"/>
<g fill="none" stroke="#ffffff" stroke-width="1.2">
<path d="M1404.3,886.8 A12,12 0 0 1 1416.3,874.8 M1407,886.8 A9.3,9.3 0 0 1 1416.3,877.5 M1409.8,886.8 A6.5,6.5 0 0 1 1416.3,880.3"/>
</g>
<circle cx="1414.6" cy="885.4" r="1.4" fill="#ffffff"/>
<g fill="none" stroke="#ffffff" stroke-width="1.2">
<path d="M1425,878.2 H1427.6 L1431,874.8 V885.8 L1427.6,882.4 H1425 Z M1433.8,878.6 Q1435.2,880.3 1433.8,882 M1436.2,876.6 Q1438.8,880.3 1436.2,884"/>
<path d="M1438.8,874.6 Q1442.2,880.3 1438.8,886.2" stroke="#7a8290"/>
</g>
<g fill="none" stroke="#ffffff" stroke-width="1.2">
<path d="M1559.7,872.7 H1574.4 V884.2 H1569.6 L1566.9,886.9 L1564.2,884.2 H1559.7 Z"/>
</g>
<rect x="1595" y="860" width="1" height="40" fill="#737a87"/></svg>
<div class="t" style="left:1451.00px;top:873.13px;font-size:13.2px;line-height:13.2px;color:#ffffff;transform:scaleX(0.857);transform-origin:0 0;">ROU</div>
<div class="t" style="left:1500.00px;top:864.03px;font-size:13.2px;line-height:13.2px;color:#ffffff;transform:scaleX(0.809);transform-origin:0 0;">20:34</div>
<div class="t" style="left:1488.00px;top:882.33px;font-size:13.2px;line-height:13.2px;color:#ffffff;transform:scaleX(0.8);transform-origin:0 0;">16.04.2021</div>
</body></html>
